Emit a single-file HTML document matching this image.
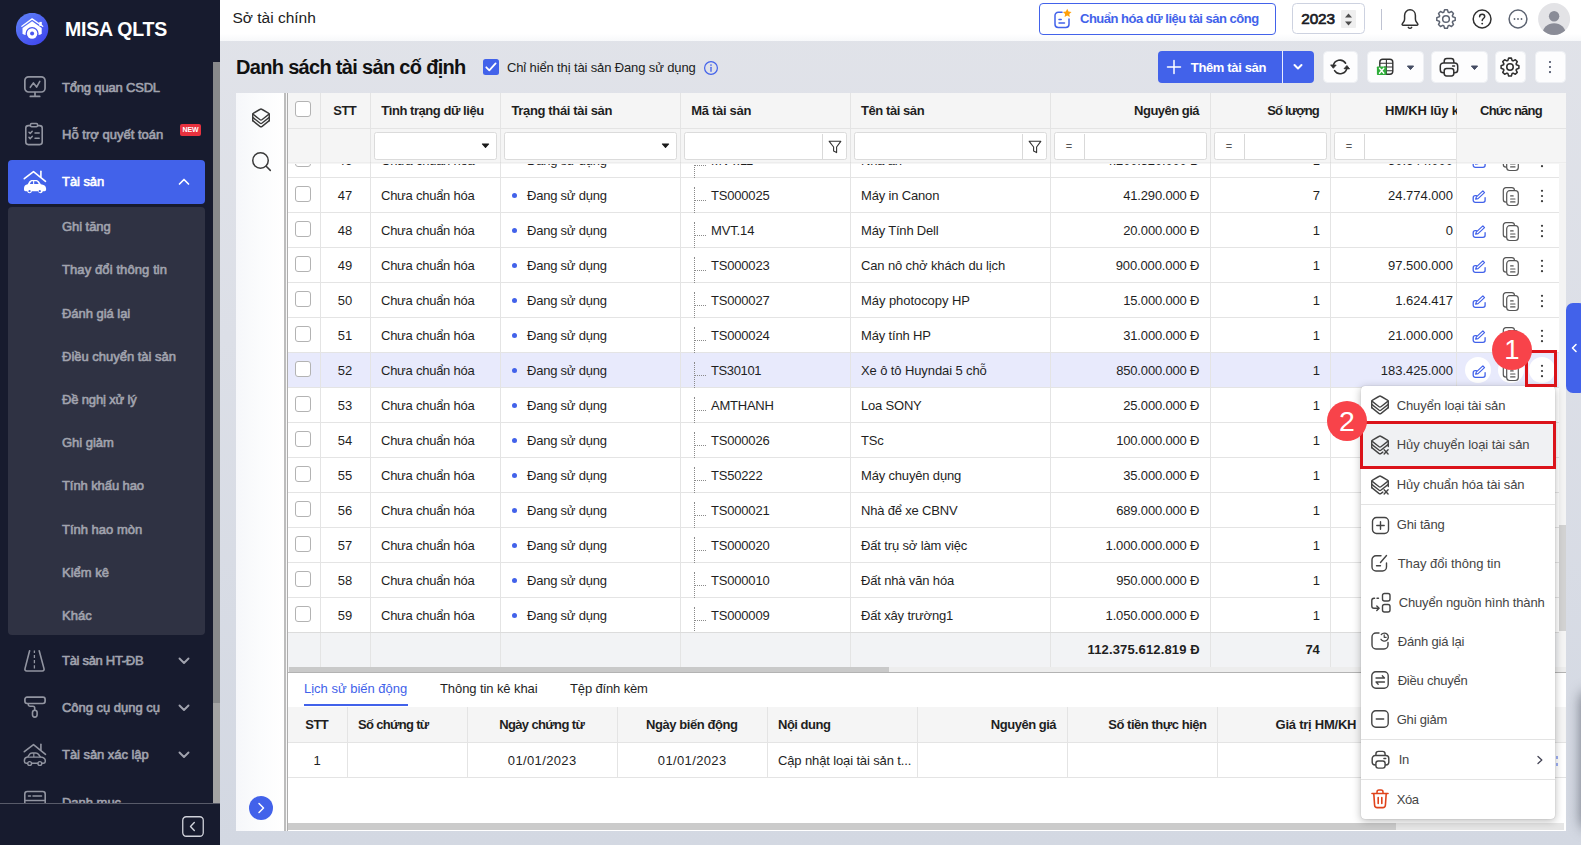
<!DOCTYPE html>
<html lang="vi"><head><meta charset="utf-8"><title>MISA QLTS</title>
<style>
html,body{margin:0;padding:0}
body{width:1581px;height:845px;overflow:hidden;position:relative;font-family:"Liberation Sans", sans-serif;background:linear-gradient(180deg,#e1e3e9 0%,#dcdfe7 40%,#d3d8e2 100%);-webkit-font-smoothing:antialiased}
div,svg{box-sizing:border-box}
</style></head><body>
<div id="sidebar" style="position:absolute;left:0;top:0;width:220px;height:845px;background:#171b2e;overflow:hidden">
<svg style="position:absolute;left:16px;top:13px;" width="33" height="33" viewBox="0 0 33 33" fill="none">
<defs><linearGradient id="lg" x1="0.15" y1="0.1" x2="0.85" y2="0.95"><stop offset="0" stop-color="#5c7cf6"/><stop offset="1" stop-color="#3f46ee"/></linearGradient></defs>
<circle cx="16.100" cy="16" r="16.200" fill="url(#lg)"/>
<path d="M5.900 13.300 L16.100 5.900 L26.700 13.300" stroke="#fff" stroke-width="1.300" stroke-linecap="round" stroke-linejoin="round"/>
<rect x="23.300" y="8.900" width="2.500" height="4" fill="#fff"/>
<path d="M16.100 8.200 L25.700 15 V20.200 L24.300 21.700 H7.900 L6.500 20.200 V15 Z" fill="#fff"/>
<circle cx="16.100" cy="20.500" r="6.500" fill="#4a57f0"/>
<circle cx="16.100" cy="20.500" r="5.200" fill="#fff"/>
<circle cx="16.100" cy="20.500" r="2" fill="#4a57f0"/>
</svg>
<div style="position:absolute;top:16.80px;line-height:24px;font-size:19.5px;font-weight:700;color:#fff;white-space:nowrap;letter-spacing:-0.222px;left:65px;">MISA QLTS</div>
<svg style="position:absolute;left:23px;top:75px;" width="24" height="24" viewBox="0 0 24 24" fill="none">
<rect x="1.850" y="1.800" width="20.200" height="15.200" rx="3.800" stroke="#9295a1" stroke-width="1.700"/>
<path d="M12 17.500v3.900M7.300 21.400h9.400" stroke="#9295a1" stroke-width="1.700" stroke-linecap="round"/>
<path d="M7.300 12.300l3.100-4.400 3.200 4.200 3.200-5.700" stroke="#9295a1" stroke-width="1.600" stroke-linecap="round" stroke-linejoin="round"/></svg>
<div style="position:absolute;top:78.30px;line-height:20px;font-size:13px;font-weight:400;color:#a1a3ae;white-space:nowrap;letter-spacing:-0.182px;-webkit-text-stroke:0.6px #a1a3ae;left:62px;">Tổng quan CSDL</div>
<svg style="position:absolute;left:23px;top:122px;" width="24" height="24" viewBox="0 0 24 24" fill="none">
<rect x="2.800" y="3.600" width="16.400" height="19" rx="2.500" stroke="#9295a1" stroke-width="1.600"/>
<path d="M7.500 3.800V2.600a1 1 0 0 1 1-1h5a1 1 0 0 1 1 1v1.200a1 1 0 0 1-1 1h-5a1 1 0 0 1-1-1z" stroke="#9295a1" stroke-width="1.500" fill="#171b2e"/>
<path d="M6 10.200l1.200 1.200 2-2.200M6 15.400l1.200 1.200 2-2.200M12 11h4.200M12 16.200h4.200" stroke="#9295a1" stroke-width="1.500" stroke-linecap="round" stroke-linejoin="round"/></svg>
<div style="position:absolute;top:124.80px;line-height:20px;font-size:13px;font-weight:400;color:#a1a3ae;white-space:nowrap;letter-spacing:0.016px;-webkit-text-stroke:0.6px #a1a3ae;left:62px;">Hỗ trợ quyết toán</div>
<div style="position:absolute;left:180px;top:124px;width:21px;height:12px;border-radius:2px;background:#e8323f;color:#fff;font-size:7px;font-weight:700;line-height:12px;text-align:center;letter-spacing:-0.1px">NEW</div>
<div style="position:absolute;left:8px;top:160px;width:197px;height:44px;background:#4262ea;border-radius:4px"></div>
<svg style="position:absolute;left:23px;top:169px;" width="24" height="25" viewBox="0 0 24 25" fill="none"><path d="M1.300 9.700 L10.500 2.600 L22.500 12.300" stroke="#fff" stroke-width="1.600" stroke-linecap="round" stroke-linejoin="round"/>
<path d="M17.900 2.300v5.500" stroke="#fff" stroke-width="1.600" stroke-linecap="round"/><path d="M1 19.300c0-2.300 1.400-3.700 3.700-4l1.400-2.500c.7-1.300 1.800-1.900 3.300-1.900h3.400c1.500 0 2.600.6 3.400 1.800l1.700 2.600c2.900.3 5.200 1.600 5.200 4.100v1.200c0 1-.6 1.700-1.700 1.700h-1.600a2.400 2.400 0 0 1-4.700 0H8.900a2.400 2.400 0 0 1-4.700 0H2.700C1.600 22.300 1 21.600 1 20.600z" fill="#fff"/>
<path d="M6.800 15l1.100-2c.3-.5.700-.8 1.300-.8h.9V15z M11.200 12.200h1.800c.6 0 1.100.3 1.400.8l1.300 2h-4.500z" fill="#4262ea"/>
<circle cx="6.550" cy="22.200" r="1.150" fill="#4262ea"/><circle cx="16.750" cy="22.200" r="1.150" fill="#4262ea"/></svg>
<div style="position:absolute;top:172.30px;line-height:20px;font-size:13px;font-weight:400;color:#fff;white-space:nowrap;letter-spacing:-0.063px;-webkit-text-stroke:0.6px #fff;left:62px;">Tài sản</div>
<svg style="position:absolute;left:178px;top:175.5px;" width="12" height="12" viewBox="0 0 12 12" fill="none"><path d="M1.5 8 L6 3.5 L10.5 8" stroke="#fff" stroke-width="1.7" stroke-linecap="round" stroke-linejoin="round"/></svg>
<div style="position:absolute;left:8px;top:207px;width:197px;height:428px;background:#2f3243;border-radius:4px"></div>
<div style="position:absolute;top:217.10px;line-height:20px;font-size:13px;font-weight:400;color:#a1a3ae;white-space:nowrap;letter-spacing:-0.057px;-webkit-text-stroke:0.6px #a1a3ae;left:62px;">Ghi tăng</div>
<div style="position:absolute;top:260.30px;line-height:20px;font-size:13px;font-weight:400;color:#a1a3ae;white-space:nowrap;letter-spacing:0.102px;-webkit-text-stroke:0.6px #a1a3ae;left:62px;">Thay đổi thông tin</div>
<div style="position:absolute;top:303.50px;line-height:20px;font-size:13px;font-weight:400;color:#a1a3ae;white-space:nowrap;letter-spacing:-0.038px;-webkit-text-stroke:0.6px #a1a3ae;left:62px;">Đánh giá lại</div>
<div style="position:absolute;top:346.70px;line-height:20px;font-size:13px;font-weight:400;color:#a1a3ae;white-space:nowrap;letter-spacing:-0.01px;-webkit-text-stroke:0.6px #a1a3ae;left:62px;">Điều chuyển tài sản</div>
<div style="position:absolute;top:389.90px;line-height:20px;font-size:13px;font-weight:400;color:#a1a3ae;white-space:nowrap;letter-spacing:-0.148px;-webkit-text-stroke:0.6px #a1a3ae;left:62px;">Đề nghị xử lý</div>
<div style="position:absolute;top:433.10px;line-height:20px;font-size:13px;font-weight:400;color:#a1a3ae;white-space:nowrap;letter-spacing:-0.029px;-webkit-text-stroke:0.6px #a1a3ae;left:62px;">Ghi giảm</div>
<div style="position:absolute;top:476.30px;line-height:20px;font-size:13px;font-weight:400;color:#a1a3ae;white-space:nowrap;letter-spacing:-0.087px;-webkit-text-stroke:0.6px #a1a3ae;left:62px;">Tính khấu hao</div>
<div style="position:absolute;top:519.50px;line-height:20px;font-size:13px;font-weight:400;color:#a1a3ae;white-space:nowrap;letter-spacing:-0.002px;-webkit-text-stroke:0.6px #a1a3ae;left:62px;">Tính hao mòn</div>
<div style="position:absolute;top:562.70px;line-height:20px;font-size:13px;font-weight:400;color:#a1a3ae;white-space:nowrap;letter-spacing:-0.01px;-webkit-text-stroke:0.6px #a1a3ae;left:62px;">Kiểm kê</div>
<div style="position:absolute;top:605.90px;line-height:20px;font-size:13px;font-weight:400;color:#a1a3ae;white-space:nowrap;letter-spacing:0.015px;-webkit-text-stroke:0.6px #a1a3ae;left:62px;">Khác</div>
<svg style="position:absolute;left:23px;top:648px;" width="24" height="25" viewBox="0 0 24 25" fill="none">
<path d="M6.600 2.800 L2 20.600 c-.4 1.400.3 2.400 1.700 2.400 h15.600 c1.400 0 2.100-1 1.700-2.400 L16.200 2.800" stroke="#9295a1" stroke-width="1.600" stroke-linecap="round" stroke-linejoin="round"/>
<path d="M11.400 2.600v2.400M11.400 7v3M11.400 12v3.200M11.400 17.200v3.300" stroke="#9295a1" stroke-width="1.300"/></svg>
<div style="position:absolute;top:651.30px;line-height:20px;font-size:13px;font-weight:400;color:#a1a3ae;white-space:nowrap;letter-spacing:-0.304px;-webkit-text-stroke:0.6px #a1a3ae;left:62px;">Tài sản HT-ĐB</div>
<svg style="position:absolute;left:178px;top:654.5px;" width="12" height="12" viewBox="0 0 12 12" fill="none"><path d="M1.5 3.5 L6 8 L10.5 3.5" stroke="#a1a3ae" stroke-width="1.900" stroke-linecap="round" stroke-linejoin="round"/></svg>
<svg style="position:absolute;left:23px;top:695.2px;" width="24" height="25" viewBox="0 0 24 25" fill="none">
<rect x="1.900" y="2.100" width="20.200" height="6.400" rx="2.200" stroke="#9295a1" stroke-width="1.700"/>
<path d="M5.300 8.800v.7a1.800 1.800 0 0 0 1.800 1.800h2.900a1.700 1.700 0 0 1 1.700 1.700v1.800" stroke="#9295a1" stroke-width="1.600" stroke-linecap="round"/>
<rect x="9.500" y="15.200" width="4.600" height="6.900" rx="2.300" stroke="#9295a1" stroke-width="1.600"/></svg>
<div style="position:absolute;top:698.30px;line-height:20px;font-size:13px;font-weight:400;color:#a1a3ae;white-space:nowrap;letter-spacing:-0.026px;-webkit-text-stroke:0.6px #a1a3ae;left:62px;">Công cụ dụng cụ</div>
<svg style="position:absolute;left:178px;top:701.5px;" width="12" height="12" viewBox="0 0 12 12" fill="none"><path d="M1.5 3.5 L6 8 L10.5 3.5" stroke="#a1a3ae" stroke-width="1.900" stroke-linecap="round" stroke-linejoin="round"/></svg>
<svg style="position:absolute;left:23px;top:742px;" width="24" height="25" viewBox="0 0 24 25" fill="none"><path d="M1.300 9.700 L10.500 2.600 L22.500 12.300" stroke="#9295a1" stroke-width="1.600" stroke-linecap="round" stroke-linejoin="round"/>
<path d="M17.900 2.300v5.500" stroke="#9295a1" stroke-width="1.600" stroke-linecap="round"/><path d="M4.300 21.300H3.400c-1.300 0-2-.8-2-2v-.9c0-1.900 1.300-3 3.300-3.300l1.600-2.500c.6-1 1.500-1.500 2.700-1.500h3.800c1.200 0 2.100.5 2.800 1.400l2 2.600c2.700.3 4.700 1.500 4.700 3.700v.5c0 1.200-.7 2-2 2h-.9M9 21.300h5.600" stroke="#9295a1" stroke-width="1.500" stroke-linecap="round" stroke-linejoin="round"/>
<path d="M5.500 15.100h11.600M10.800 11.500v3.400" stroke="#9295a1" stroke-width="1.200" stroke-linecap="round"/>
<circle cx="6.650" cy="21.500" r="1.900" stroke="#9295a1" stroke-width="1.400"/><circle cx="16.850" cy="21.500" r="1.900" stroke="#9295a1" stroke-width="1.400"/></svg>
<div style="position:absolute;top:745.30px;line-height:20px;font-size:13px;font-weight:400;color:#a1a3ae;white-space:nowrap;letter-spacing:-0.049px;-webkit-text-stroke:0.6px #a1a3ae;left:62px;">Tài sản xác lập</div>
<svg style="position:absolute;left:178px;top:748.5px;" width="12" height="12" viewBox="0 0 12 12" fill="none"><path d="M1.5 3.5 L6 8 L10.5 3.5" stroke="#a1a3ae" stroke-width="1.900" stroke-linecap="round" stroke-linejoin="round"/></svg>
<svg style="position:absolute;left:23px;top:789px;" width="24" height="24" viewBox="0 0 24 24" fill="none">
<rect x="1.800" y="2.500" width="20.400" height="19" rx="2.500" stroke="#9295a1" stroke-width="1.600"/>
<path d="M5.500 7h2M10 7h8.500M2 11.500h20" stroke="#9295a1" stroke-width="1.600" stroke-linecap="round"/></svg>
<div style="position:absolute;top:793.30px;line-height:20px;font-size:13px;font-weight:400;color:#a1a3ae;white-space:nowrap;letter-spacing:-0.019px;-webkit-text-stroke:0.6px #a1a3ae;left:62px;">Danh mục</div>
<div style="position:absolute;left:213px;top:41px;width:7px;height:762px;background:#a4a4a4"></div>
<div style="position:absolute;left:213px;top:62px;width:7px;height:641px;background:#88898b"></div>
<div style="position:absolute;left:213px;top:0px;width:7px;height:62px;background:#171b2e"></div>
<div style="position:absolute;left:0px;top:803px;width:220px;height:42px;background:#171b2e;border-top:1px solid #585b69"></div>
<svg style="position:absolute;left:182px;top:816px;" width="22" height="21" viewBox="0 0 22 21" fill="none"><rect x="0.75" y="0.75" width="20.5" height="19.5" rx="3.5" stroke="#d0d2da" stroke-width="1.3"/><path d="M12.3 6.5 L8.5 10.5 L12.3 14.5" stroke="#d0d2da" stroke-width="1.4" stroke-linecap="round" stroke-linejoin="round"/></svg>
</div>
<div id="topbar" style="position:absolute;left:220px;top:0;width:1361px;height:41px;background:linear-gradient(180deg,#fff 0%,#fff 82%,#f7f8fa 100%)"></div>
<div style="position:absolute;top:7.20px;line-height:22px;font-size:15.5px;font-weight:400;color:#212121;white-space:nowrap;letter-spacing:-0.009px;left:232.5px;">Sở tài chính</div>
<div style="position:absolute;left:1039px;top:3px;width:237px;height:32px;border:1px solid #4262ea;border-radius:4px;background:#fff"></div>
<svg style="position:absolute;left:1051px;top:8px;" width="22" height="22" viewBox="0 0 22 22" fill="none">
<path d="M11 4.3H7.2A3.2 3.2 0 0 0 4 7.5v8.800a3.200 3.200 0 0 0 3.200 3.200h7.600a3.200 3.200 0 0 0 3.200-3.200V11" stroke="#4262ea" stroke-width="1.5" stroke-linecap="round"/>
<path d="M8 11.500h2.200M8 15h5.500" stroke="#4262ea" stroke-width="1.5" stroke-linecap="round"/>
<path d="M16.2 0.800l1.300 2.700 3 .4-2.200 2.100.5 3-2.600-1.400-2.600 1.400.5-3-2.200-2.100 3-.4z" fill="#ff9f0a"/></svg>
<div style="position:absolute;top:9.30px;line-height:20px;font-size:13px;font-weight:700;color:#4262ea;white-space:nowrap;letter-spacing:-0.497px;left:1080px;">Chuẩn hóa dữ liệu tài sản công</div>
<div style="position:absolute;left:1292px;top:3px;width:73px;height:31px;border:1px solid #cdd2e0;border-radius:4.500px;background:#fff"></div>
<div style="position:absolute;top:7.70px;line-height:22px;font-size:15.3px;font-weight:400;color:#1a1a24;white-space:nowrap;letter-spacing:-0.133px;-webkit-text-stroke:0.7px #1a1a24;left:1301.3px;">2023</div>
<div style="position:absolute;left:1341px;top:10px;width:15px;height:17.7px;background:#efefef;border-radius:1px"></div>
<svg style="position:absolute;left:1344px;top:11.5px;" width="9" height="15" viewBox="0 0 9 15" fill="none"><path d="M1 5.500 L4.500 1.600 L8 5.500z M1 9.400 L4.500 13.400 L8 9.400z" fill="#4d4d4d"/></svg>
<div style="position:absolute;left:1381px;top:9px;width:1px;height:21px;background:#bfc3d2"></div>
<svg style="position:absolute;left:1398px;top:6.8px;" width="24" height="24" viewBox="0 0 24 24" fill="none"><path d="M12 2.800c-3.100 0-5.400 2.400-5.400 5.600v3.600c0 1.300-.4 2.300-1.200 3.300l-1 1.300c-.6.800-.2 1.700.8 1.700h13.600c1 0 1.400-.9.800-1.700l-1-1.300c-.8-1-1.200-2-1.200-3.300V8.400c0-3.200-2.300-5.600-5.400-5.600z" stroke="#303030" stroke-width="1.500" stroke-linejoin="round"/><path d="M10.300 20.300c.4.600 1 .9 1.700.9s1.300-.3 1.700-.9" stroke="#303030" stroke-width="1.400" stroke-linecap="round"/></svg>
<svg style="position:absolute;left:1434px;top:6.800000000000001px;" width="24" height="24" viewBox="-12 -12 24 24" fill="none"><path d="M-2.22 -6.71 L-1.39 -9.20 L1.39 -9.20 L2.22 -6.71 L3.17 -6.32 L5.52 -7.48 L7.48 -5.52 L6.32 -3.17 L6.71 -2.22 L9.20 -1.39 L9.20 1.39 L6.71 2.22 L6.32 3.17 L7.48 5.52 L5.52 7.48 L3.17 6.32 L2.22 6.71 L1.39 9.20 L-1.39 9.20 L-2.22 6.71 L-3.17 6.32 L-5.52 7.48 L-7.48 5.52 L-6.32 3.17 L-6.71 2.22 L-9.20 1.39 L-9.20 -1.39 L-6.71 -2.22 L-6.32 -3.17 L-7.48 -5.52 L-5.52 -7.48 L-3.17 -6.32 Z" stroke="#5d6472" stroke-width="1.5" stroke-linejoin="round"/><circle cx="0" cy="0" r="3.35" stroke="#5d6472" stroke-width="1.5"/></svg>
<svg style="position:absolute;left:1470px;top:6.8px;" width="24" height="24" viewBox="0 0 24 24" fill="none"><circle cx="12.100" cy="12" r="8.900" stroke="#303030" stroke-width="1.500"/><path d="M9.600 9.700c0-1.500 1.100-2.500 2.600-2.500 1.400 0 2.500.9 2.500 2.300 0 1.900-2.500 2.100-2.500 4" stroke="#303030" stroke-width="1.500" stroke-linecap="round"/><circle cx="12.200" cy="16.600" r="0.950" fill="#303030"/></svg>
<svg style="position:absolute;left:1506px;top:6.8px;" width="24" height="24" viewBox="0 0 24 24" fill="none"><circle cx="12" cy="12" r="8.900" stroke="#5d6472" stroke-width="1.500"/><circle cx="8.500" cy="12" r="0.900" fill="#5d6472"/><circle cx="12" cy="12" r="0.900" fill="#5d6472"/><circle cx="15.500" cy="12" r="0.900" fill="#5d6472"/></svg>
<svg style="position:absolute;left:1538px;top:2.8px;" width="33" height="33" viewBox="0 0 33 33" fill="none"><defs><clipPath id="av"><circle cx="16.100" cy="16" r="16"/></clipPath></defs><circle cx="16.100" cy="16" r="16" fill="#e3e3e6"/><g clip-path="url(#av)"><circle cx="16.100" cy="13.300" r="5.200" fill="#8a8c97"/><path d="M4.600 31c0-6.500 5-10.700 11.500-10.700S27.600 24.500 27.600 31v4h-23z" fill="#8a8c97"/></g></svg>
<div style="position:absolute;top:53.30px;line-height:28px;font-size:20px;font-weight:700;color:#111;white-space:nowrap;letter-spacing:-0.685px;left:236px;">Danh sách tài sản cố định</div>
<div style="position:absolute;left:483px;top:59px;width:16px;height:16px;background:#4262ea;border-radius:2.500px"></div>
<svg style="position:absolute;left:483px;top:59px;" width="16" height="16" viewBox="0 0 16 16" fill="none"><path d="M3.300 8.300l3 3 6.300-6.900" stroke="#fff" stroke-width="1.800" stroke-linecap="round" stroke-linejoin="round"/></svg>
<div style="position:absolute;top:58.30px;line-height:20px;font-size:13px;font-weight:400;color:#222;white-space:nowrap;letter-spacing:-0.133px;left:507px;">Chỉ hiển thị tài sản Đang sử dụng</div>
<svg style="position:absolute;left:703px;top:60px;" width="16" height="16" viewBox="0 0 16 16" fill="none"><circle cx="8" cy="8" r="6.400" stroke="#4262ea" stroke-width="1.200"/><path d="M8 7.300v4" stroke="#4262ea" stroke-width="1.300" stroke-linecap="round"/><circle cx="8" cy="5" r="0.850" fill="#4262ea"/></svg>
<div style="position:absolute;left:1158px;top:51px;width:156px;height:32px;background:#4262ea;border-radius:4px"></div>
<div style="position:absolute;left:1282px;top:51px;width:1px;height:32px;background:#e8ecff"></div>
<svg style="position:absolute;left:1166px;top:59px;" width="16" height="16" viewBox="0 0 16 16" fill="none"><path d="M8 1.500v13M1.500 8h13" stroke="#fff" stroke-width="1.500" stroke-linecap="round"/></svg>
<div style="position:absolute;top:57.50px;line-height:20px;font-size:13px;font-weight:700;color:#fff;white-space:nowrap;letter-spacing:-0.356px;left:1190.8px;">Thêm tài sản</div>
<svg style="position:absolute;left:1292px;top:61px;" width="12" height="12" viewBox="0 0 12 12" fill="none"><path d="M2.500 4 L6 7.500 L9.500 4" stroke="#fff" stroke-width="2" stroke-linecap="round" stroke-linejoin="round"/></svg>
<div style="position:absolute;left:1322.5px;top:51px;width:35px;height:32px;background:#fdfdfe;border:1px solid #eef0f4;border-radius:4.500px"></div>
<svg style="position:absolute;left:1328px;top:55px;" width="24" height="24" viewBox="0 0 24 24" fill="none"><path d="M5.300 11.200a6.700 6.700 0 0 1 12.300-3" stroke="#303030" stroke-width="1.600" stroke-linecap="round"/><path d="M18.900 12.600a6.700 6.700 0 0 1-12.300 3" stroke="#303030" stroke-width="1.600" stroke-linecap="round"/>
<path d="M2.600 9.900l2.700 3.400 2.900-3.200z" fill="#303030" stroke="#303030" stroke-width="0.800" stroke-linejoin="round"/><path d="M21.600 13.900l-2.700-3.400-2.900 3.200z" fill="#303030" stroke="#303030" stroke-width="0.800" stroke-linejoin="round"/></svg>
<div style="position:absolute;left:1366.5px;top:51px;width:57px;height:32px;background:#fdfdfe;border:1px solid #eef0f4;border-radius:4.500px"></div>
<svg style="position:absolute;left:1375px;top:56px;" width="22" height="22" viewBox="0 0 22 22" fill="none"><rect x="4.800" y="3.300" width="13" height="15" rx="3" stroke="#303030" stroke-width="1.400"/><path d="M4.800 7.200h13M9 11h8.800M9 14.800h8.800M11.400 3.300v15" stroke="#303030" stroke-width="1.100"/>
<rect x="1.900" y="10.400" width="9.600" height="8.600" rx="0.800" fill="#2fae3a"/><path d="M4.500 12.200l4.300 5M8.800 12.200l-4.300 5" stroke="#fff" stroke-width="1.400" stroke-linecap="round"/></svg>
<svg style="position:absolute;left:1406px;top:64.5px;" width="9" height="6" viewBox="0 0 9 6" fill="none"><path d="M1.400 1h6.200L4.500 4.600z" fill="#444c63" stroke="#444c63" stroke-width="1" stroke-linejoin="round"/></svg>
<div style="position:absolute;left:1430.5px;top:51px;width:57px;height:32px;background:#fdfdfe;border:1px solid #eef0f4;border-radius:4.500px"></div>
<svg style="position:absolute;left:1438px;top:56px;" width="22" height="22" viewBox="0 0 22 22" fill="none"><path d="M6.200 7V5.200A2.700 2.700 0 0 1 8.900 2.500h4.200a2.700 2.700 0 0 1 2.700 2.700V7" stroke="#303030" stroke-width="1.5"/>
<path d="M6.200 16.800H5.400A3.100 3.100 0 0 1 2.300 13.700V10A3.100 3.100 0 0 1 5.400 6.900h11.200A3.100 3.100 0 0 1 19.700 10v3.700a3.100 3.100 0 0 1-3.100 3.100h-.8" stroke="#303030" stroke-width="1.5"/>
<rect x="6.200" y="12.500" width="9.600" height="7.500" rx="2.400" stroke="#303030" stroke-width="1.5"/><path d="M14.600 9.900h1.900" stroke="#303030" stroke-width="1.5" stroke-linecap="round"/></svg>
<svg style="position:absolute;left:1470px;top:64.5px;" width="9" height="6" viewBox="0 0 9 6" fill="none"><path d="M1.400 1h6.200L4.500 4.600z" fill="#444c63" stroke="#444c63" stroke-width="1" stroke-linejoin="round"/></svg>
<div style="position:absolute;left:1494.5px;top:51px;width:31px;height:32px;background:#fdfdfe;border:1px solid #eef0f4;border-radius:4.500px"></div>
<svg style="position:absolute;left:1498px;top:55px;" width="24" height="24" viewBox="-12 -12 24 24" fill="none"><path d="M-2.15 -6.49 L-1.34 -8.90 L1.34 -8.90 L2.15 -6.49 L3.07 -6.11 L5.34 -7.24 L7.24 -5.34 L6.11 -3.07 L6.49 -2.15 L8.90 -1.34 L8.90 1.34 L6.49 2.15 L6.11 3.07 L7.24 5.34 L5.34 7.24 L3.07 6.11 L2.15 6.49 L1.34 8.90 L-1.34 8.90 L-2.15 6.49 L-3.07 6.11 L-5.34 7.24 L-7.24 5.34 L-6.11 3.07 L-6.49 2.15 L-8.90 1.34 L-8.90 -1.34 L-6.49 -2.15 L-6.11 -3.07 L-7.24 -5.34 L-5.34 -7.24 L-3.07 -6.11 Z" stroke="#303030" stroke-width="1.55" stroke-linejoin="round"/><circle cx="0" cy="0" r="3.24" stroke="#303030" stroke-width="1.55"/></svg>
<div style="position:absolute;left:1534.5px;top:51px;width:31px;height:32px;background:#fdfdfe;border:1px solid #eef0f4;border-radius:4.500px"></div>
<svg style="position:absolute;left:1547px;top:59px;" width="6" height="16" viewBox="0 0 6 16" fill="none"><circle cx="3" cy="3" r="1.050" fill="#444c63"/><circle cx="3" cy="8" r="1.050" fill="#444c63"/><circle cx="3" cy="13.100" r="1.050" fill="#444c63"/></svg>
<div style="position:absolute;left:236px;top:93px;width:1330px;height:738px;background:#fff"></div>
<div style="position:absolute;left:236px;top:93px;width:48px;height:738px;background:linear-gradient(to right,#f6f7fa 0%,#fbfcfd 50%,#fff 100%)"></div>
<svg style="position:absolute;left:250px;top:107.3px;" width="22" height="22" viewBox="-11 -11 22 22" fill="none"><g transform="scale(0.940,1)"><path d="M-1.300 -8.500 Q0 -9.300 1.300 -8.500 L7.900 -4.900 Q9.300 -4.100 7.900 -3.300 L1.300 1.500 Q0 2.400 -1.300 1.500 L-7.900 -3.300 Q-9.300 -4.100 -7.900 -4.900 Z" stroke="#3a3a3a" stroke-width="1.5" stroke-linejoin="round"/><path d="M-8.800 -0.600 L-1.200 5 Q0 5.800 1.200 5 L8.800 -0.600 M-8.800 2.700 L-1.200 8.400 Q0 9.200 1.200 8.400 L8.800 2.700" stroke="#3a3a3a" stroke-width="1.5" stroke-linecap="round" stroke-linejoin="round"/><path d="M-8.800 -4.100 V2.700 M8.800 -4.100 V2.700" stroke="#3a3a3a" stroke-width="1.5" stroke-linecap="round"/></g></svg>
<svg style="position:absolute;left:250px;top:150px;" width="23" height="23" viewBox="0 0 23 23" fill="none"><circle cx="10.500" cy="10.500" r="7.750" stroke="#3a3a3a" stroke-width="1.500"/><path d="M16.200 16.300l4.100 4.100" stroke="#3a3a3a" stroke-width="1.500" stroke-linecap="round"/></svg>
<div style="position:absolute;left:249px;top:796px;width:24px;height:24px;background:#4262ea;border-radius:12px"></div>
<svg style="position:absolute;left:249px;top:796px;" width="24" height="24" viewBox="0 0 24 24" fill="none"><path d="M10 7.500l4.500 4.500-4.500 4.500" stroke="#fff" stroke-width="1.500" stroke-linecap="round" stroke-linejoin="round"/></svg>
<div style="position:absolute;left:284px;top:93px;width:2px;height:738px;background:#bdbdbd"></div>
<div style="position:absolute;left:286px;top:93px;width:1px;height:738px;background:#f7f7f7"></div>
<div style="position:absolute;left:287px;top:93px;width:1px;height:738px;background:#adadad"></div>
<div style="position:absolute;left:0;top:163px;width:1581px;height:505px;overflow:hidden"><div style="position:absolute;left:0;top:-163px;width:1581px;height:845px">
<div style="position:absolute;left:288px;top:177px;width:1271px;height:1px;background:#e4e4e4"></div>
<div style="position:absolute;left:295px;top:151px;width:16px;height:16px;background:#fff;border:1px solid #b3b3b3;border-radius:3px"></div>
<div style="position:absolute;top:150.80px;line-height:20px;font-size:13px;font-weight:400;color:#1f1f1f;white-space:nowrap;left:145.00px;width:400px;text-align:center;">46</div>
<div style="position:absolute;top:150.80px;line-height:20px;font-size:13px;font-weight:400;color:#1f1f1f;white-space:nowrap;letter-spacing:-0.249px;left:381px;">Chưa chuẩn hóa</div>
<div style="position:absolute;left:511.5px;top:157.5px;width:5px;height:5px;background:#4262ea;border-radius:3px"></div>
<div style="position:absolute;top:150.80px;line-height:20px;font-size:13px;font-weight:400;color:#1f1f1f;white-space:nowrap;letter-spacing:-0.228px;left:527px;">Đang sử dụng</div>
<div style="position:absolute;left:694px;top:152px;width:1px;height:26px;border-left:1px dotted #8a8a8a"></div>
<div style="position:absolute;left:695px;top:165px;width:11px;height:1px;border-top:1px dotted #8a8a8a"></div>
<div style="position:absolute;top:150.80px;line-height:20px;font-size:13px;font-weight:400;color:#1f1f1f;white-space:nowrap;letter-spacing:-0.18px;left:711px;">MVT.11</div>
<div style="position:absolute;top:150.80px;line-height:20px;font-size:13px;font-weight:400;color:#1f1f1f;white-space:nowrap;letter-spacing:-0.175px;left:861px;">Nhà ăn</div>
<div style="position:absolute;top:150.80px;line-height:20px;font-size:13px;font-weight:400;color:#1f1f1f;white-space:nowrap;letter-spacing:-0.16px;right:381.66px;text-align:right;">4.200.520.000 Đ</div>
<div style="position:absolute;top:150.80px;line-height:20px;font-size:13px;font-weight:400;color:#1f1f1f;white-space:nowrap;right:261.00px;text-align:right;">1</div>
<div style="position:absolute;top:150.80px;line-height:20px;font-size:13px;font-weight:400;color:#1f1f1f;white-space:nowrap;right:128.00px;text-align:right;">50.644.000</div>
<div style="position:absolute;left:288px;top:212px;width:1271px;height:1px;background:#e4e4e4"></div>
<div style="position:absolute;left:295px;top:186px;width:16px;height:16px;background:#fff;border:1px solid #b3b3b3;border-radius:3px"></div>
<div style="position:absolute;top:185.80px;line-height:20px;font-size:13px;font-weight:400;color:#1f1f1f;white-space:nowrap;left:145.00px;width:400px;text-align:center;">47</div>
<div style="position:absolute;top:185.80px;line-height:20px;font-size:13px;font-weight:400;color:#1f1f1f;white-space:nowrap;letter-spacing:-0.249px;left:381px;">Chưa chuẩn hóa</div>
<div style="position:absolute;left:511.5px;top:192.5px;width:5px;height:5px;background:#4262ea;border-radius:3px"></div>
<div style="position:absolute;top:185.80px;line-height:20px;font-size:13px;font-weight:400;color:#1f1f1f;white-space:nowrap;letter-spacing:-0.228px;left:527px;">Đang sử dụng</div>
<div style="position:absolute;left:694px;top:187px;width:1px;height:26px;border-left:1px dotted #8a8a8a"></div>
<div style="position:absolute;left:695px;top:200px;width:11px;height:1px;border-top:1px dotted #8a8a8a"></div>
<div style="position:absolute;top:185.80px;line-height:20px;font-size:13px;font-weight:400;color:#1f1f1f;white-space:nowrap;letter-spacing:-0.188px;left:711px;">TS000025</div>
<div style="position:absolute;top:185.80px;line-height:20px;font-size:13px;font-weight:400;color:#1f1f1f;white-space:nowrap;letter-spacing:-0.168px;left:861px;">Máy in Canon</div>
<div style="position:absolute;top:185.80px;line-height:20px;font-size:13px;font-weight:400;color:#1f1f1f;white-space:nowrap;letter-spacing:-0.157px;right:381.66px;text-align:right;">41.290.000 Đ</div>
<div style="position:absolute;top:185.80px;line-height:20px;font-size:13px;font-weight:400;color:#1f1f1f;white-space:nowrap;right:261.00px;text-align:right;">7</div>
<div style="position:absolute;top:185.80px;line-height:20px;font-size:13px;font-weight:400;color:#1f1f1f;white-space:nowrap;right:128.00px;text-align:right;">24.774.000</div>
<div style="position:absolute;left:288px;top:247px;width:1271px;height:1px;background:#e4e4e4"></div>
<div style="position:absolute;left:295px;top:221px;width:16px;height:16px;background:#fff;border:1px solid #b3b3b3;border-radius:3px"></div>
<div style="position:absolute;top:220.80px;line-height:20px;font-size:13px;font-weight:400;color:#1f1f1f;white-space:nowrap;left:145.00px;width:400px;text-align:center;">48</div>
<div style="position:absolute;top:220.80px;line-height:20px;font-size:13px;font-weight:400;color:#1f1f1f;white-space:nowrap;letter-spacing:-0.249px;left:381px;">Chưa chuẩn hóa</div>
<div style="position:absolute;left:511.5px;top:227.5px;width:5px;height:5px;background:#4262ea;border-radius:3px"></div>
<div style="position:absolute;top:220.80px;line-height:20px;font-size:13px;font-weight:400;color:#1f1f1f;white-space:nowrap;letter-spacing:-0.228px;left:527px;">Đang sử dụng</div>
<div style="position:absolute;left:694px;top:222px;width:1px;height:26px;border-left:1px dotted #8a8a8a"></div>
<div style="position:absolute;left:695px;top:235px;width:11px;height:1px;border-top:1px dotted #8a8a8a"></div>
<div style="position:absolute;top:220.80px;line-height:20px;font-size:13px;font-weight:400;color:#1f1f1f;white-space:nowrap;letter-spacing:-0.13px;left:711px;">MVT.14</div>
<div style="position:absolute;top:220.80px;line-height:20px;font-size:13px;font-weight:400;color:#1f1f1f;white-space:nowrap;letter-spacing:-0.19px;left:861px;">Máy Tính Dell</div>
<div style="position:absolute;top:220.80px;line-height:20px;font-size:13px;font-weight:400;color:#1f1f1f;white-space:nowrap;letter-spacing:-0.163px;right:381.66px;text-align:right;">20.000.000 Đ</div>
<div style="position:absolute;top:220.80px;line-height:20px;font-size:13px;font-weight:400;color:#1f1f1f;white-space:nowrap;right:261.00px;text-align:right;">1</div>
<div style="position:absolute;top:220.80px;line-height:20px;font-size:13px;font-weight:400;color:#1f1f1f;white-space:nowrap;right:128.00px;text-align:right;">0</div>
<div style="position:absolute;left:288px;top:282px;width:1271px;height:1px;background:#e4e4e4"></div>
<div style="position:absolute;left:295px;top:256px;width:16px;height:16px;background:#fff;border:1px solid #b3b3b3;border-radius:3px"></div>
<div style="position:absolute;top:255.80px;line-height:20px;font-size:13px;font-weight:400;color:#1f1f1f;white-space:nowrap;left:145.00px;width:400px;text-align:center;">49</div>
<div style="position:absolute;top:255.80px;line-height:20px;font-size:13px;font-weight:400;color:#1f1f1f;white-space:nowrap;letter-spacing:-0.249px;left:381px;">Chưa chuẩn hóa</div>
<div style="position:absolute;left:511.5px;top:262.5px;width:5px;height:5px;background:#4262ea;border-radius:3px"></div>
<div style="position:absolute;top:255.80px;line-height:20px;font-size:13px;font-weight:400;color:#1f1f1f;white-space:nowrap;letter-spacing:-0.228px;left:527px;">Đang sử dụng</div>
<div style="position:absolute;left:694px;top:257px;width:1px;height:26px;border-left:1px dotted #8a8a8a"></div>
<div style="position:absolute;left:695px;top:270px;width:11px;height:1px;border-top:1px dotted #8a8a8a"></div>
<div style="position:absolute;top:255.80px;line-height:20px;font-size:13px;font-weight:400;color:#1f1f1f;white-space:nowrap;letter-spacing:-0.188px;left:711px;">TS000023</div>
<div style="position:absolute;top:255.80px;line-height:20px;font-size:13px;font-weight:400;color:#1f1f1f;white-space:nowrap;letter-spacing:-0.133px;left:861px;">Can nô chở khách du lịch</div>
<div style="position:absolute;top:255.80px;line-height:20px;font-size:13px;font-weight:400;color:#1f1f1f;white-space:nowrap;letter-spacing:-0.123px;right:381.62px;text-align:right;">900.000.000 Đ</div>
<div style="position:absolute;top:255.80px;line-height:20px;font-size:13px;font-weight:400;color:#1f1f1f;white-space:nowrap;right:261.00px;text-align:right;">1</div>
<div style="position:absolute;top:255.80px;line-height:20px;font-size:13px;font-weight:400;color:#1f1f1f;white-space:nowrap;right:128.00px;text-align:right;">97.500.000</div>
<div style="position:absolute;left:288px;top:317px;width:1271px;height:1px;background:#e4e4e4"></div>
<div style="position:absolute;left:295px;top:291px;width:16px;height:16px;background:#fff;border:1px solid #b3b3b3;border-radius:3px"></div>
<div style="position:absolute;top:290.80px;line-height:20px;font-size:13px;font-weight:400;color:#1f1f1f;white-space:nowrap;left:145.00px;width:400px;text-align:center;">50</div>
<div style="position:absolute;top:290.80px;line-height:20px;font-size:13px;font-weight:400;color:#1f1f1f;white-space:nowrap;letter-spacing:-0.249px;left:381px;">Chưa chuẩn hóa</div>
<div style="position:absolute;left:511.5px;top:297.5px;width:5px;height:5px;background:#4262ea;border-radius:3px"></div>
<div style="position:absolute;top:290.80px;line-height:20px;font-size:13px;font-weight:400;color:#1f1f1f;white-space:nowrap;letter-spacing:-0.228px;left:527px;">Đang sử dụng</div>
<div style="position:absolute;left:694px;top:292px;width:1px;height:26px;border-left:1px dotted #8a8a8a"></div>
<div style="position:absolute;left:695px;top:305px;width:11px;height:1px;border-top:1px dotted #8a8a8a"></div>
<div style="position:absolute;top:290.80px;line-height:20px;font-size:13px;font-weight:400;color:#1f1f1f;white-space:nowrap;letter-spacing:-0.188px;left:711px;">TS000027</div>
<div style="position:absolute;top:290.80px;line-height:20px;font-size:13px;font-weight:400;color:#1f1f1f;white-space:nowrap;letter-spacing:-0.059px;left:861px;">Máy photocopy HP</div>
<div style="position:absolute;top:290.80px;line-height:20px;font-size:13px;font-weight:400;color:#1f1f1f;white-space:nowrap;letter-spacing:-0.163px;right:381.66px;text-align:right;">15.000.000 Đ</div>
<div style="position:absolute;top:290.80px;line-height:20px;font-size:13px;font-weight:400;color:#1f1f1f;white-space:nowrap;right:261.00px;text-align:right;">1</div>
<div style="position:absolute;top:290.80px;line-height:20px;font-size:13px;font-weight:400;color:#1f1f1f;white-space:nowrap;right:128.00px;text-align:right;">1.624.417</div>
<div style="position:absolute;left:288px;top:352px;width:1271px;height:1px;background:#e4e4e4"></div>
<div style="position:absolute;left:295px;top:326px;width:16px;height:16px;background:#fff;border:1px solid #b3b3b3;border-radius:3px"></div>
<div style="position:absolute;top:325.80px;line-height:20px;font-size:13px;font-weight:400;color:#1f1f1f;white-space:nowrap;left:145.00px;width:400px;text-align:center;">51</div>
<div style="position:absolute;top:325.80px;line-height:20px;font-size:13px;font-weight:400;color:#1f1f1f;white-space:nowrap;letter-spacing:-0.249px;left:381px;">Chưa chuẩn hóa</div>
<div style="position:absolute;left:511.5px;top:332.5px;width:5px;height:5px;background:#4262ea;border-radius:3px"></div>
<div style="position:absolute;top:325.80px;line-height:20px;font-size:13px;font-weight:400;color:#1f1f1f;white-space:nowrap;letter-spacing:-0.228px;left:527px;">Đang sử dụng</div>
<div style="position:absolute;left:694px;top:327px;width:1px;height:26px;border-left:1px dotted #8a8a8a"></div>
<div style="position:absolute;left:695px;top:340px;width:11px;height:1px;border-top:1px dotted #8a8a8a"></div>
<div style="position:absolute;top:325.80px;line-height:20px;font-size:13px;font-weight:400;color:#1f1f1f;white-space:nowrap;letter-spacing:-0.188px;left:711px;">TS000024</div>
<div style="position:absolute;top:325.80px;line-height:20px;font-size:13px;font-weight:400;color:#1f1f1f;white-space:nowrap;letter-spacing:-0.166px;left:861px;">Máy tính HP</div>
<div style="position:absolute;top:325.80px;line-height:20px;font-size:13px;font-weight:400;color:#1f1f1f;white-space:nowrap;letter-spacing:-0.163px;right:381.66px;text-align:right;">31.000.000 Đ</div>
<div style="position:absolute;top:325.80px;line-height:20px;font-size:13px;font-weight:400;color:#1f1f1f;white-space:nowrap;right:261.00px;text-align:right;">1</div>
<div style="position:absolute;top:325.80px;line-height:20px;font-size:13px;font-weight:400;color:#1f1f1f;white-space:nowrap;right:128.00px;text-align:right;">21.000.000</div>
<div style="position:absolute;left:288px;top:353px;width:1271px;height:34px;background:#e8eafc"></div>
<div style="position:absolute;left:288px;top:387px;width:1271px;height:1px;background:#e4e4e4"></div>
<div style="position:absolute;left:295px;top:361px;width:16px;height:16px;background:#fff;border:1px solid #b3b3b3;border-radius:3px"></div>
<div style="position:absolute;top:360.80px;line-height:20px;font-size:13px;font-weight:400;color:#1f1f1f;white-space:nowrap;left:145.00px;width:400px;text-align:center;">52</div>
<div style="position:absolute;top:360.80px;line-height:20px;font-size:13px;font-weight:400;color:#1f1f1f;white-space:nowrap;letter-spacing:-0.249px;left:381px;">Chưa chuẩn hóa</div>
<div style="position:absolute;left:511.5px;top:367.5px;width:5px;height:5px;background:#4262ea;border-radius:3px"></div>
<div style="position:absolute;top:360.80px;line-height:20px;font-size:13px;font-weight:400;color:#1f1f1f;white-space:nowrap;letter-spacing:-0.228px;left:527px;">Đang sử dụng</div>
<div style="position:absolute;left:694px;top:362px;width:1px;height:26px;border-left:1px dotted #8a8a8a"></div>
<div style="position:absolute;left:695px;top:375px;width:11px;height:1px;border-top:1px dotted #8a8a8a"></div>
<div style="position:absolute;top:360.80px;line-height:20px;font-size:13px;font-weight:400;color:#1f1f1f;white-space:nowrap;letter-spacing:-0.381px;left:711px;">TS30101</div>
<div style="position:absolute;top:360.80px;line-height:20px;font-size:13px;font-weight:400;color:#1f1f1f;white-space:nowrap;letter-spacing:-0.106px;left:861px;">Xe ô tô Huyndai 5 chỗ</div>
<div style="position:absolute;top:360.80px;line-height:20px;font-size:13px;font-weight:400;color:#1f1f1f;white-space:nowrap;letter-spacing:-0.164px;right:381.66px;text-align:right;">850.000.000 Đ</div>
<div style="position:absolute;top:360.80px;line-height:20px;font-size:13px;font-weight:400;color:#1f1f1f;white-space:nowrap;right:261.00px;text-align:right;">1</div>
<div style="position:absolute;top:360.80px;line-height:20px;font-size:13px;font-weight:400;color:#1f1f1f;white-space:nowrap;right:128.00px;text-align:right;">183.425.000</div>
<div style="position:absolute;left:288px;top:422px;width:1271px;height:1px;background:#e4e4e4"></div>
<div style="position:absolute;left:295px;top:396px;width:16px;height:16px;background:#fff;border:1px solid #b3b3b3;border-radius:3px"></div>
<div style="position:absolute;top:395.80px;line-height:20px;font-size:13px;font-weight:400;color:#1f1f1f;white-space:nowrap;left:145.00px;width:400px;text-align:center;">53</div>
<div style="position:absolute;top:395.80px;line-height:20px;font-size:13px;font-weight:400;color:#1f1f1f;white-space:nowrap;letter-spacing:-0.249px;left:381px;">Chưa chuẩn hóa</div>
<div style="position:absolute;left:511.5px;top:402.5px;width:5px;height:5px;background:#4262ea;border-radius:3px"></div>
<div style="position:absolute;top:395.80px;line-height:20px;font-size:13px;font-weight:400;color:#1f1f1f;white-space:nowrap;letter-spacing:-0.228px;left:527px;">Đang sử dụng</div>
<div style="position:absolute;left:694px;top:397px;width:1px;height:26px;border-left:1px dotted #8a8a8a"></div>
<div style="position:absolute;left:695px;top:410px;width:11px;height:1px;border-top:1px dotted #8a8a8a"></div>
<div style="position:absolute;top:395.80px;line-height:20px;font-size:13px;font-weight:400;color:#1f1f1f;white-space:nowrap;letter-spacing:-0.23px;left:711px;">AMTHANH</div>
<div style="position:absolute;top:395.80px;line-height:20px;font-size:13px;font-weight:400;color:#1f1f1f;white-space:nowrap;letter-spacing:-0.194px;left:861px;">Loa SONY</div>
<div style="position:absolute;top:395.80px;line-height:20px;font-size:13px;font-weight:400;color:#1f1f1f;white-space:nowrap;letter-spacing:-0.163px;right:381.66px;text-align:right;">25.000.000 Đ</div>
<div style="position:absolute;top:395.80px;line-height:20px;font-size:13px;font-weight:400;color:#1f1f1f;white-space:nowrap;right:261.00px;text-align:right;">1</div>
<div style="position:absolute;top:395.80px;line-height:20px;font-size:13px;font-weight:400;color:#1f1f1f;white-space:nowrap;right:128.00px;text-align:right;">5.000.000</div>
<div style="position:absolute;left:288px;top:457px;width:1271px;height:1px;background:#e4e4e4"></div>
<div style="position:absolute;left:295px;top:431px;width:16px;height:16px;background:#fff;border:1px solid #b3b3b3;border-radius:3px"></div>
<div style="position:absolute;top:430.80px;line-height:20px;font-size:13px;font-weight:400;color:#1f1f1f;white-space:nowrap;left:145.00px;width:400px;text-align:center;">54</div>
<div style="position:absolute;top:430.80px;line-height:20px;font-size:13px;font-weight:400;color:#1f1f1f;white-space:nowrap;letter-spacing:-0.249px;left:381px;">Chưa chuẩn hóa</div>
<div style="position:absolute;left:511.5px;top:437.5px;width:5px;height:5px;background:#4262ea;border-radius:3px"></div>
<div style="position:absolute;top:430.80px;line-height:20px;font-size:13px;font-weight:400;color:#1f1f1f;white-space:nowrap;letter-spacing:-0.228px;left:527px;">Đang sử dụng</div>
<div style="position:absolute;left:694px;top:432px;width:1px;height:26px;border-left:1px dotted #8a8a8a"></div>
<div style="position:absolute;left:695px;top:445px;width:11px;height:1px;border-top:1px dotted #8a8a8a"></div>
<div style="position:absolute;top:430.80px;line-height:20px;font-size:13px;font-weight:400;color:#1f1f1f;white-space:nowrap;letter-spacing:-0.188px;left:711px;">TS000026</div>
<div style="position:absolute;top:430.80px;line-height:20px;font-size:13px;font-weight:400;color:#1f1f1f;white-space:nowrap;letter-spacing:-0.193px;left:861px;">TSc</div>
<div style="position:absolute;top:430.80px;line-height:20px;font-size:13px;font-weight:400;color:#1f1f1f;white-space:nowrap;letter-spacing:-0.164px;right:381.66px;text-align:right;">100.000.000 Đ</div>
<div style="position:absolute;top:430.80px;line-height:20px;font-size:13px;font-weight:400;color:#1f1f1f;white-space:nowrap;right:261.00px;text-align:right;">1</div>
<div style="position:absolute;top:430.80px;line-height:20px;font-size:13px;font-weight:400;color:#1f1f1f;white-space:nowrap;right:128.00px;text-align:right;">0</div>
<div style="position:absolute;left:288px;top:492px;width:1271px;height:1px;background:#e4e4e4"></div>
<div style="position:absolute;left:295px;top:466px;width:16px;height:16px;background:#fff;border:1px solid #b3b3b3;border-radius:3px"></div>
<div style="position:absolute;top:465.80px;line-height:20px;font-size:13px;font-weight:400;color:#1f1f1f;white-space:nowrap;left:145.00px;width:400px;text-align:center;">55</div>
<div style="position:absolute;top:465.80px;line-height:20px;font-size:13px;font-weight:400;color:#1f1f1f;white-space:nowrap;letter-spacing:-0.249px;left:381px;">Chưa chuẩn hóa</div>
<div style="position:absolute;left:511.5px;top:472.5px;width:5px;height:5px;background:#4262ea;border-radius:3px"></div>
<div style="position:absolute;top:465.80px;line-height:20px;font-size:13px;font-weight:400;color:#1f1f1f;white-space:nowrap;letter-spacing:-0.228px;left:527px;">Đang sử dụng</div>
<div style="position:absolute;left:694px;top:467px;width:1px;height:26px;border-left:1px dotted #8a8a8a"></div>
<div style="position:absolute;left:695px;top:480px;width:11px;height:1px;border-top:1px dotted #8a8a8a"></div>
<div style="position:absolute;top:465.80px;line-height:20px;font-size:13px;font-weight:400;color:#1f1f1f;white-space:nowrap;letter-spacing:-0.188px;left:711px;">TS50222</div>
<div style="position:absolute;top:465.80px;line-height:20px;font-size:13px;font-weight:400;color:#1f1f1f;white-space:nowrap;letter-spacing:-0.171px;left:861px;">Máy chuyên dụng</div>
<div style="position:absolute;top:465.80px;line-height:20px;font-size:13px;font-weight:400;color:#1f1f1f;white-space:nowrap;letter-spacing:-0.163px;right:381.66px;text-align:right;">35.000.000 Đ</div>
<div style="position:absolute;top:465.80px;line-height:20px;font-size:13px;font-weight:400;color:#1f1f1f;white-space:nowrap;right:261.00px;text-align:right;">1</div>
<div style="position:absolute;top:465.80px;line-height:20px;font-size:13px;font-weight:400;color:#1f1f1f;white-space:nowrap;right:128.00px;text-align:right;">0</div>
<div style="position:absolute;left:288px;top:527px;width:1271px;height:1px;background:#e4e4e4"></div>
<div style="position:absolute;left:295px;top:501px;width:16px;height:16px;background:#fff;border:1px solid #b3b3b3;border-radius:3px"></div>
<div style="position:absolute;top:500.80px;line-height:20px;font-size:13px;font-weight:400;color:#1f1f1f;white-space:nowrap;left:145.00px;width:400px;text-align:center;">56</div>
<div style="position:absolute;top:500.80px;line-height:20px;font-size:13px;font-weight:400;color:#1f1f1f;white-space:nowrap;letter-spacing:-0.249px;left:381px;">Chưa chuẩn hóa</div>
<div style="position:absolute;left:511.5px;top:507.5px;width:5px;height:5px;background:#4262ea;border-radius:3px"></div>
<div style="position:absolute;top:500.80px;line-height:20px;font-size:13px;font-weight:400;color:#1f1f1f;white-space:nowrap;letter-spacing:-0.228px;left:527px;">Đang sử dụng</div>
<div style="position:absolute;left:694px;top:502px;width:1px;height:26px;border-left:1px dotted #8a8a8a"></div>
<div style="position:absolute;left:695px;top:515px;width:11px;height:1px;border-top:1px dotted #8a8a8a"></div>
<div style="position:absolute;top:500.80px;line-height:20px;font-size:13px;font-weight:400;color:#1f1f1f;white-space:nowrap;letter-spacing:-0.188px;left:711px;">TS000021</div>
<div style="position:absolute;top:500.80px;line-height:20px;font-size:13px;font-weight:400;color:#1f1f1f;white-space:nowrap;letter-spacing:-0.177px;left:861px;">Nhà để xe CBNV</div>
<div style="position:absolute;top:500.80px;line-height:20px;font-size:13px;font-weight:400;color:#1f1f1f;white-space:nowrap;letter-spacing:-0.164px;right:381.66px;text-align:right;">689.000.000 Đ</div>
<div style="position:absolute;top:500.80px;line-height:20px;font-size:13px;font-weight:400;color:#1f1f1f;white-space:nowrap;right:261.00px;text-align:right;">1</div>
<div style="position:absolute;top:500.80px;line-height:20px;font-size:13px;font-weight:400;color:#1f1f1f;white-space:nowrap;right:128.00px;text-align:right;">0</div>
<div style="position:absolute;left:288px;top:562px;width:1271px;height:1px;background:#e4e4e4"></div>
<div style="position:absolute;left:295px;top:536px;width:16px;height:16px;background:#fff;border:1px solid #b3b3b3;border-radius:3px"></div>
<div style="position:absolute;top:535.80px;line-height:20px;font-size:13px;font-weight:400;color:#1f1f1f;white-space:nowrap;left:145.00px;width:400px;text-align:center;">57</div>
<div style="position:absolute;top:535.80px;line-height:20px;font-size:13px;font-weight:400;color:#1f1f1f;white-space:nowrap;letter-spacing:-0.249px;left:381px;">Chưa chuẩn hóa</div>
<div style="position:absolute;left:511.5px;top:542.5px;width:5px;height:5px;background:#4262ea;border-radius:3px"></div>
<div style="position:absolute;top:535.80px;line-height:20px;font-size:13px;font-weight:400;color:#1f1f1f;white-space:nowrap;letter-spacing:-0.228px;left:527px;">Đang sử dụng</div>
<div style="position:absolute;left:694px;top:537px;width:1px;height:26px;border-left:1px dotted #8a8a8a"></div>
<div style="position:absolute;left:695px;top:550px;width:11px;height:1px;border-top:1px dotted #8a8a8a"></div>
<div style="position:absolute;top:535.80px;line-height:20px;font-size:13px;font-weight:400;color:#1f1f1f;white-space:nowrap;letter-spacing:-0.188px;left:711px;">TS000020</div>
<div style="position:absolute;top:535.80px;line-height:20px;font-size:13px;font-weight:400;color:#1f1f1f;white-space:nowrap;letter-spacing:-0.143px;left:861px;">Đất trụ sở làm việc</div>
<div style="position:absolute;top:535.80px;line-height:20px;font-size:13px;font-weight:400;color:#1f1f1f;white-space:nowrap;letter-spacing:-0.16px;right:381.66px;text-align:right;">1.000.000.000 Đ</div>
<div style="position:absolute;top:535.80px;line-height:20px;font-size:13px;font-weight:400;color:#1f1f1f;white-space:nowrap;right:261.00px;text-align:right;">1</div>
<div style="position:absolute;top:535.80px;line-height:20px;font-size:13px;font-weight:400;color:#1f1f1f;white-space:nowrap;right:128.00px;text-align:right;">0</div>
<div style="position:absolute;left:288px;top:597px;width:1271px;height:1px;background:#e4e4e4"></div>
<div style="position:absolute;left:295px;top:571px;width:16px;height:16px;background:#fff;border:1px solid #b3b3b3;border-radius:3px"></div>
<div style="position:absolute;top:570.80px;line-height:20px;font-size:13px;font-weight:400;color:#1f1f1f;white-space:nowrap;left:145.00px;width:400px;text-align:center;">58</div>
<div style="position:absolute;top:570.80px;line-height:20px;font-size:13px;font-weight:400;color:#1f1f1f;white-space:nowrap;letter-spacing:-0.249px;left:381px;">Chưa chuẩn hóa</div>
<div style="position:absolute;left:511.5px;top:577.5px;width:5px;height:5px;background:#4262ea;border-radius:3px"></div>
<div style="position:absolute;top:570.80px;line-height:20px;font-size:13px;font-weight:400;color:#1f1f1f;white-space:nowrap;letter-spacing:-0.228px;left:527px;">Đang sử dụng</div>
<div style="position:absolute;left:694px;top:572px;width:1px;height:26px;border-left:1px dotted #8a8a8a"></div>
<div style="position:absolute;left:695px;top:585px;width:11px;height:1px;border-top:1px dotted #8a8a8a"></div>
<div style="position:absolute;top:570.80px;line-height:20px;font-size:13px;font-weight:400;color:#1f1f1f;white-space:nowrap;letter-spacing:-0.188px;left:711px;">TS000010</div>
<div style="position:absolute;top:570.80px;line-height:20px;font-size:13px;font-weight:400;color:#1f1f1f;white-space:nowrap;letter-spacing:-0.159px;left:861px;">Đất nhà văn hóa</div>
<div style="position:absolute;top:570.80px;line-height:20px;font-size:13px;font-weight:400;color:#1f1f1f;white-space:nowrap;letter-spacing:-0.164px;right:381.66px;text-align:right;">950.000.000 Đ</div>
<div style="position:absolute;top:570.80px;line-height:20px;font-size:13px;font-weight:400;color:#1f1f1f;white-space:nowrap;right:261.00px;text-align:right;">1</div>
<div style="position:absolute;top:570.80px;line-height:20px;font-size:13px;font-weight:400;color:#1f1f1f;white-space:nowrap;right:128.00px;text-align:right;">0</div>
<div style="position:absolute;left:288px;top:632px;width:1271px;height:1px;background:#e4e4e4"></div>
<div style="position:absolute;left:295px;top:606px;width:16px;height:16px;background:#fff;border:1px solid #b3b3b3;border-radius:3px"></div>
<div style="position:absolute;top:605.80px;line-height:20px;font-size:13px;font-weight:400;color:#1f1f1f;white-space:nowrap;left:145.00px;width:400px;text-align:center;">59</div>
<div style="position:absolute;top:605.80px;line-height:20px;font-size:13px;font-weight:400;color:#1f1f1f;white-space:nowrap;letter-spacing:-0.249px;left:381px;">Chưa chuẩn hóa</div>
<div style="position:absolute;left:511.5px;top:612.5px;width:5px;height:5px;background:#4262ea;border-radius:3px"></div>
<div style="position:absolute;top:605.80px;line-height:20px;font-size:13px;font-weight:400;color:#1f1f1f;white-space:nowrap;letter-spacing:-0.228px;left:527px;">Đang sử dụng</div>
<div style="position:absolute;left:694px;top:607px;width:1px;height:26px;border-left:1px dotted #8a8a8a"></div>
<div style="position:absolute;left:695px;top:620px;width:11px;height:1px;border-top:1px dotted #8a8a8a"></div>
<div style="position:absolute;top:605.80px;line-height:20px;font-size:13px;font-weight:400;color:#1f1f1f;white-space:nowrap;letter-spacing:-0.188px;left:711px;">TS000009</div>
<div style="position:absolute;top:605.80px;line-height:20px;font-size:13px;font-weight:400;color:#1f1f1f;white-space:nowrap;letter-spacing:-0.158px;left:861px;">Đất xây trường1</div>
<div style="position:absolute;top:605.80px;line-height:20px;font-size:13px;font-weight:400;color:#1f1f1f;white-space:nowrap;letter-spacing:-0.16px;right:381.66px;text-align:right;">1.050.000.000 Đ</div>
<div style="position:absolute;top:605.80px;line-height:20px;font-size:13px;font-weight:400;color:#1f1f1f;white-space:nowrap;right:261.00px;text-align:right;">1</div>
<div style="position:absolute;top:605.80px;line-height:20px;font-size:13px;font-weight:400;color:#1f1f1f;white-space:nowrap;right:128.00px;text-align:right;">0</div>
<div style="position:absolute;left:320px;top:163px;width:1px;height:505px;background:#e4e4e4"></div>
<div style="position:absolute;left:370px;top:163px;width:1px;height:505px;background:#e4e4e4"></div>
<div style="position:absolute;left:500px;top:163px;width:1px;height:505px;background:#e4e4e4"></div>
<div style="position:absolute;left:680px;top:163px;width:1px;height:505px;background:#e4e4e4"></div>
<div style="position:absolute;left:850px;top:163px;width:1px;height:505px;background:#e4e4e4"></div>
<div style="position:absolute;left:1050px;top:163px;width:1px;height:505px;background:#e4e4e4"></div>
<div style="position:absolute;left:1210px;top:163px;width:1px;height:505px;background:#e4e4e4"></div>
<div style="position:absolute;left:1330px;top:163px;width:1px;height:505px;background:#e4e4e4"></div>
<div style="position:absolute;left:1456px;top:163px;width:1px;height:505px;background:#e4e4e4"></div>
<div style="position:absolute;left:1457px;top:143px;width:102px;height:34px;background:#fff"></div>
<svg style="position:absolute;left:1470.5px;top:153px;" width="16" height="16" viewBox="0 0 16 16" fill="none"><path d="M5.400 7.700H4.300A2.100 2.100 0 0 0 2.200 9.800v2.400a2.100 2.100 0 0 0 2.100 2.100h7.700a2.100 2.100 0 0 0 2.100-2.100V9.700" stroke="#4262ea" stroke-width="1.300" stroke-linecap="round"/>
<path d="M4.600 11.200 L5.400 8.830 L11.890 2.820 L13.520 4.580 L7.030 10.590 Z" stroke="#4262ea" stroke-width="1.200" stroke-linejoin="round"/></svg>
<svg style="position:absolute;left:1502px;top:151.9px;" width="18" height="20" viewBox="0 0 18 20" fill="none"><path d="M12.500 3.300V3.200A2.700 2.700 0 0 0 9.800 .7H4A2.700 2.700 0 0 0 1.300 3.400v9A2.700 2.700 0 0 0 4 15.100h.2" stroke="#555" stroke-width="1.200" stroke-linecap="round"/>
<rect x="4.700" y="3.700" width="11.600" height="14.800" rx="3" stroke="#555" stroke-width="1.200"/>
<path d="M8.600 8.900h2.600M8.600 12h4.400M8.600 14.900h4.400" stroke="#555" stroke-width="1.100" stroke-linecap="round"/></svg>
<svg style="position:absolute;left:1539px;top:153.35px;" width="6" height="16" viewBox="0 0 6 16" fill="none"><circle cx="3" cy="2.800" r="1.100" fill="#3a3a3a"/><circle cx="3" cy="8" r="1.100" fill="#3a3a3a"/><circle cx="3" cy="13.200" r="1.100" fill="#3a3a3a"/></svg>
<div style="position:absolute;left:1457px;top:178px;width:102px;height:34px;background:#fff"></div>
<svg style="position:absolute;left:1470.5px;top:188px;" width="16" height="16" viewBox="0 0 16 16" fill="none"><path d="M5.400 7.700H4.300A2.100 2.100 0 0 0 2.200 9.800v2.400a2.100 2.100 0 0 0 2.100 2.100h7.700a2.100 2.100 0 0 0 2.100-2.100V9.700" stroke="#4262ea" stroke-width="1.300" stroke-linecap="round"/>
<path d="M4.600 11.200 L5.400 8.830 L11.890 2.820 L13.520 4.580 L7.030 10.590 Z" stroke="#4262ea" stroke-width="1.200" stroke-linejoin="round"/></svg>
<svg style="position:absolute;left:1502px;top:186.9px;" width="18" height="20" viewBox="0 0 18 20" fill="none"><path d="M12.500 3.300V3.200A2.700 2.700 0 0 0 9.800 .7H4A2.700 2.700 0 0 0 1.300 3.400v9A2.700 2.700 0 0 0 4 15.100h.2" stroke="#555" stroke-width="1.200" stroke-linecap="round"/>
<rect x="4.700" y="3.700" width="11.600" height="14.800" rx="3" stroke="#555" stroke-width="1.200"/>
<path d="M8.600 8.900h2.600M8.600 12h4.400M8.600 14.900h4.400" stroke="#555" stroke-width="1.100" stroke-linecap="round"/></svg>
<svg style="position:absolute;left:1539px;top:188.35px;" width="6" height="16" viewBox="0 0 6 16" fill="none"><circle cx="3" cy="2.800" r="1.100" fill="#3a3a3a"/><circle cx="3" cy="8" r="1.100" fill="#3a3a3a"/><circle cx="3" cy="13.200" r="1.100" fill="#3a3a3a"/></svg>
<div style="position:absolute;left:1457px;top:213px;width:102px;height:34px;background:#fff"></div>
<svg style="position:absolute;left:1470.5px;top:223px;" width="16" height="16" viewBox="0 0 16 16" fill="none"><path d="M5.400 7.700H4.300A2.100 2.100 0 0 0 2.200 9.800v2.400a2.100 2.100 0 0 0 2.100 2.100h7.700a2.100 2.100 0 0 0 2.100-2.100V9.700" stroke="#4262ea" stroke-width="1.300" stroke-linecap="round"/>
<path d="M4.600 11.200 L5.400 8.830 L11.890 2.820 L13.520 4.580 L7.030 10.590 Z" stroke="#4262ea" stroke-width="1.200" stroke-linejoin="round"/></svg>
<svg style="position:absolute;left:1502px;top:221.9px;" width="18" height="20" viewBox="0 0 18 20" fill="none"><path d="M12.500 3.300V3.200A2.700 2.700 0 0 0 9.800 .7H4A2.700 2.700 0 0 0 1.300 3.400v9A2.700 2.700 0 0 0 4 15.100h.2" stroke="#555" stroke-width="1.200" stroke-linecap="round"/>
<rect x="4.700" y="3.700" width="11.600" height="14.800" rx="3" stroke="#555" stroke-width="1.200"/>
<path d="M8.600 8.900h2.600M8.600 12h4.400M8.600 14.900h4.400" stroke="#555" stroke-width="1.100" stroke-linecap="round"/></svg>
<svg style="position:absolute;left:1539px;top:223.35px;" width="6" height="16" viewBox="0 0 6 16" fill="none"><circle cx="3" cy="2.800" r="1.100" fill="#3a3a3a"/><circle cx="3" cy="8" r="1.100" fill="#3a3a3a"/><circle cx="3" cy="13.200" r="1.100" fill="#3a3a3a"/></svg>
<div style="position:absolute;left:1457px;top:248px;width:102px;height:34px;background:#fff"></div>
<svg style="position:absolute;left:1470.5px;top:258px;" width="16" height="16" viewBox="0 0 16 16" fill="none"><path d="M5.400 7.700H4.300A2.100 2.100 0 0 0 2.200 9.800v2.400a2.100 2.100 0 0 0 2.100 2.100h7.700a2.100 2.100 0 0 0 2.100-2.100V9.700" stroke="#4262ea" stroke-width="1.300" stroke-linecap="round"/>
<path d="M4.600 11.200 L5.400 8.830 L11.890 2.820 L13.520 4.580 L7.030 10.590 Z" stroke="#4262ea" stroke-width="1.200" stroke-linejoin="round"/></svg>
<svg style="position:absolute;left:1502px;top:256.9px;" width="18" height="20" viewBox="0 0 18 20" fill="none"><path d="M12.500 3.300V3.200A2.700 2.700 0 0 0 9.800 .7H4A2.700 2.700 0 0 0 1.300 3.400v9A2.700 2.700 0 0 0 4 15.100h.2" stroke="#555" stroke-width="1.200" stroke-linecap="round"/>
<rect x="4.700" y="3.700" width="11.600" height="14.800" rx="3" stroke="#555" stroke-width="1.200"/>
<path d="M8.600 8.900h2.600M8.600 12h4.400M8.600 14.900h4.400" stroke="#555" stroke-width="1.100" stroke-linecap="round"/></svg>
<svg style="position:absolute;left:1539px;top:258.35px;" width="6" height="16" viewBox="0 0 6 16" fill="none"><circle cx="3" cy="2.800" r="1.100" fill="#3a3a3a"/><circle cx="3" cy="8" r="1.100" fill="#3a3a3a"/><circle cx="3" cy="13.200" r="1.100" fill="#3a3a3a"/></svg>
<div style="position:absolute;left:1457px;top:283px;width:102px;height:34px;background:#fff"></div>
<svg style="position:absolute;left:1470.5px;top:293px;" width="16" height="16" viewBox="0 0 16 16" fill="none"><path d="M5.400 7.700H4.300A2.100 2.100 0 0 0 2.200 9.800v2.400a2.100 2.100 0 0 0 2.100 2.100h7.700a2.100 2.100 0 0 0 2.100-2.100V9.700" stroke="#4262ea" stroke-width="1.300" stroke-linecap="round"/>
<path d="M4.600 11.200 L5.400 8.830 L11.890 2.820 L13.520 4.580 L7.030 10.590 Z" stroke="#4262ea" stroke-width="1.200" stroke-linejoin="round"/></svg>
<svg style="position:absolute;left:1502px;top:291.9px;" width="18" height="20" viewBox="0 0 18 20" fill="none"><path d="M12.500 3.300V3.200A2.700 2.700 0 0 0 9.800 .7H4A2.700 2.700 0 0 0 1.300 3.400v9A2.700 2.700 0 0 0 4 15.100h.2" stroke="#555" stroke-width="1.200" stroke-linecap="round"/>
<rect x="4.700" y="3.700" width="11.600" height="14.800" rx="3" stroke="#555" stroke-width="1.200"/>
<path d="M8.600 8.900h2.600M8.600 12h4.400M8.600 14.900h4.400" stroke="#555" stroke-width="1.100" stroke-linecap="round"/></svg>
<svg style="position:absolute;left:1539px;top:293.35px;" width="6" height="16" viewBox="0 0 6 16" fill="none"><circle cx="3" cy="2.800" r="1.100" fill="#3a3a3a"/><circle cx="3" cy="8" r="1.100" fill="#3a3a3a"/><circle cx="3" cy="13.200" r="1.100" fill="#3a3a3a"/></svg>
<div style="position:absolute;left:1457px;top:318px;width:102px;height:34px;background:#fff"></div>
<svg style="position:absolute;left:1470.5px;top:328px;" width="16" height="16" viewBox="0 0 16 16" fill="none"><path d="M5.400 7.700H4.300A2.100 2.100 0 0 0 2.200 9.800v2.400a2.100 2.100 0 0 0 2.100 2.100h7.700a2.100 2.100 0 0 0 2.100-2.100V9.700" stroke="#4262ea" stroke-width="1.300" stroke-linecap="round"/>
<path d="M4.600 11.200 L5.400 8.830 L11.890 2.820 L13.520 4.580 L7.030 10.590 Z" stroke="#4262ea" stroke-width="1.200" stroke-linejoin="round"/></svg>
<svg style="position:absolute;left:1502px;top:326.9px;" width="18" height="20" viewBox="0 0 18 20" fill="none"><path d="M12.500 3.300V3.200A2.700 2.700 0 0 0 9.800 .7H4A2.700 2.700 0 0 0 1.300 3.400v9A2.700 2.700 0 0 0 4 15.100h.2" stroke="#555" stroke-width="1.200" stroke-linecap="round"/>
<rect x="4.700" y="3.700" width="11.600" height="14.800" rx="3" stroke="#555" stroke-width="1.200"/>
<path d="M8.600 8.900h2.600M8.600 12h4.400M8.600 14.900h4.400" stroke="#555" stroke-width="1.100" stroke-linecap="round"/></svg>
<svg style="position:absolute;left:1539px;top:328.35px;" width="6" height="16" viewBox="0 0 6 16" fill="none"><circle cx="3" cy="2.800" r="1.100" fill="#3a3a3a"/><circle cx="3" cy="8" r="1.100" fill="#3a3a3a"/><circle cx="3" cy="13.200" r="1.100" fill="#3a3a3a"/></svg>
<div style="position:absolute;left:1457px;top:353px;width:102px;height:34px;background:#e8eafc"></div>
<div style="position:absolute;left:1465px;top:357px;width:26px;height:26px;background:#fff;border-radius:13px"></div>
<div style="position:absolute;left:1498px;top:357px;width:26px;height:26px;background:#fff;border-radius:13px"></div>
<div style="position:absolute;left:1529px;top:357px;width:26px;height:26px;background:#fff;border-radius:13px"></div>
<svg style="position:absolute;left:1470.5px;top:363px;" width="16" height="16" viewBox="0 0 16 16" fill="none"><path d="M5.400 7.700H4.300A2.100 2.100 0 0 0 2.200 9.800v2.400a2.100 2.100 0 0 0 2.100 2.100h7.700a2.100 2.100 0 0 0 2.100-2.100V9.700" stroke="#4262ea" stroke-width="1.300" stroke-linecap="round"/>
<path d="M4.600 11.200 L5.400 8.830 L11.890 2.820 L13.520 4.580 L7.030 10.590 Z" stroke="#4262ea" stroke-width="1.200" stroke-linejoin="round"/></svg>
<svg style="position:absolute;left:1502px;top:361.9px;" width="18" height="20" viewBox="0 0 18 20" fill="none"><path d="M12.500 3.300V3.200A2.700 2.700 0 0 0 9.800 .7H4A2.700 2.700 0 0 0 1.300 3.400v9A2.700 2.700 0 0 0 4 15.100h.2" stroke="#555" stroke-width="1.200" stroke-linecap="round"/>
<rect x="4.700" y="3.700" width="11.600" height="14.800" rx="3" stroke="#555" stroke-width="1.200"/>
<path d="M8.600 8.900h2.600M8.600 12h4.400M8.600 14.900h4.400" stroke="#555" stroke-width="1.100" stroke-linecap="round"/></svg>
<svg style="position:absolute;left:1539px;top:363.35px;" width="6" height="16" viewBox="0 0 6 16" fill="none"><circle cx="3" cy="2.800" r="1.100" fill="#3a3a3a"/><circle cx="3" cy="8" r="1.100" fill="#3a3a3a"/><circle cx="3" cy="13.200" r="1.100" fill="#3a3a3a"/></svg>
<div style="position:absolute;left:1457px;top:388px;width:102px;height:34px;background:#fff"></div>
<svg style="position:absolute;left:1470.5px;top:398px;" width="16" height="16" viewBox="0 0 16 16" fill="none"><path d="M5.400 7.700H4.300A2.100 2.100 0 0 0 2.200 9.800v2.400a2.100 2.100 0 0 0 2.100 2.100h7.700a2.100 2.100 0 0 0 2.100-2.100V9.700" stroke="#4262ea" stroke-width="1.300" stroke-linecap="round"/>
<path d="M4.600 11.200 L5.400 8.830 L11.890 2.820 L13.520 4.580 L7.030 10.590 Z" stroke="#4262ea" stroke-width="1.200" stroke-linejoin="round"/></svg>
<svg style="position:absolute;left:1502px;top:396.9px;" width="18" height="20" viewBox="0 0 18 20" fill="none"><path d="M12.500 3.300V3.200A2.700 2.700 0 0 0 9.800 .7H4A2.700 2.700 0 0 0 1.300 3.400v9A2.700 2.700 0 0 0 4 15.100h.2" stroke="#555" stroke-width="1.200" stroke-linecap="round"/>
<rect x="4.700" y="3.700" width="11.600" height="14.800" rx="3" stroke="#555" stroke-width="1.200"/>
<path d="M8.600 8.900h2.600M8.600 12h4.400M8.600 14.900h4.400" stroke="#555" stroke-width="1.100" stroke-linecap="round"/></svg>
<svg style="position:absolute;left:1539px;top:398.35px;" width="6" height="16" viewBox="0 0 6 16" fill="none"><circle cx="3" cy="2.800" r="1.100" fill="#3a3a3a"/><circle cx="3" cy="8" r="1.100" fill="#3a3a3a"/><circle cx="3" cy="13.200" r="1.100" fill="#3a3a3a"/></svg>
<div style="position:absolute;left:1457px;top:423px;width:102px;height:34px;background:#fff"></div>
<svg style="position:absolute;left:1470.5px;top:433px;" width="16" height="16" viewBox="0 0 16 16" fill="none"><path d="M5.400 7.700H4.300A2.100 2.100 0 0 0 2.200 9.800v2.400a2.100 2.100 0 0 0 2.100 2.100h7.700a2.100 2.100 0 0 0 2.100-2.100V9.700" stroke="#4262ea" stroke-width="1.300" stroke-linecap="round"/>
<path d="M4.600 11.200 L5.400 8.830 L11.890 2.820 L13.520 4.580 L7.030 10.590 Z" stroke="#4262ea" stroke-width="1.200" stroke-linejoin="round"/></svg>
<svg style="position:absolute;left:1502px;top:431.9px;" width="18" height="20" viewBox="0 0 18 20" fill="none"><path d="M12.500 3.300V3.200A2.700 2.700 0 0 0 9.800 .7H4A2.700 2.700 0 0 0 1.300 3.400v9A2.700 2.700 0 0 0 4 15.100h.2" stroke="#555" stroke-width="1.200" stroke-linecap="round"/>
<rect x="4.700" y="3.700" width="11.600" height="14.800" rx="3" stroke="#555" stroke-width="1.200"/>
<path d="M8.600 8.900h2.600M8.600 12h4.400M8.600 14.900h4.400" stroke="#555" stroke-width="1.100" stroke-linecap="round"/></svg>
<svg style="position:absolute;left:1539px;top:433.35px;" width="6" height="16" viewBox="0 0 6 16" fill="none"><circle cx="3" cy="2.800" r="1.100" fill="#3a3a3a"/><circle cx="3" cy="8" r="1.100" fill="#3a3a3a"/><circle cx="3" cy="13.200" r="1.100" fill="#3a3a3a"/></svg>
<div style="position:absolute;left:1457px;top:458px;width:102px;height:34px;background:#fff"></div>
<svg style="position:absolute;left:1470.5px;top:468px;" width="16" height="16" viewBox="0 0 16 16" fill="none"><path d="M5.400 7.700H4.300A2.100 2.100 0 0 0 2.200 9.800v2.400a2.100 2.100 0 0 0 2.100 2.100h7.700a2.100 2.100 0 0 0 2.100-2.100V9.700" stroke="#4262ea" stroke-width="1.300" stroke-linecap="round"/>
<path d="M4.600 11.200 L5.400 8.830 L11.890 2.820 L13.520 4.580 L7.030 10.590 Z" stroke="#4262ea" stroke-width="1.200" stroke-linejoin="round"/></svg>
<svg style="position:absolute;left:1502px;top:466.9px;" width="18" height="20" viewBox="0 0 18 20" fill="none"><path d="M12.500 3.300V3.200A2.700 2.700 0 0 0 9.800 .7H4A2.700 2.700 0 0 0 1.300 3.400v9A2.700 2.700 0 0 0 4 15.100h.2" stroke="#555" stroke-width="1.200" stroke-linecap="round"/>
<rect x="4.700" y="3.700" width="11.600" height="14.800" rx="3" stroke="#555" stroke-width="1.200"/>
<path d="M8.600 8.900h2.600M8.600 12h4.400M8.600 14.900h4.400" stroke="#555" stroke-width="1.100" stroke-linecap="round"/></svg>
<svg style="position:absolute;left:1539px;top:468.35px;" width="6" height="16" viewBox="0 0 6 16" fill="none"><circle cx="3" cy="2.800" r="1.100" fill="#3a3a3a"/><circle cx="3" cy="8" r="1.100" fill="#3a3a3a"/><circle cx="3" cy="13.200" r="1.100" fill="#3a3a3a"/></svg>
<div style="position:absolute;left:1457px;top:493px;width:102px;height:34px;background:#fff"></div>
<svg style="position:absolute;left:1470.5px;top:503px;" width="16" height="16" viewBox="0 0 16 16" fill="none"><path d="M5.400 7.700H4.300A2.100 2.100 0 0 0 2.200 9.800v2.400a2.100 2.100 0 0 0 2.100 2.100h7.700a2.100 2.100 0 0 0 2.100-2.100V9.700" stroke="#4262ea" stroke-width="1.300" stroke-linecap="round"/>
<path d="M4.600 11.200 L5.400 8.830 L11.890 2.820 L13.520 4.580 L7.030 10.590 Z" stroke="#4262ea" stroke-width="1.200" stroke-linejoin="round"/></svg>
<svg style="position:absolute;left:1502px;top:501.9px;" width="18" height="20" viewBox="0 0 18 20" fill="none"><path d="M12.500 3.300V3.200A2.700 2.700 0 0 0 9.800 .7H4A2.700 2.700 0 0 0 1.300 3.400v9A2.700 2.700 0 0 0 4 15.100h.2" stroke="#555" stroke-width="1.200" stroke-linecap="round"/>
<rect x="4.700" y="3.700" width="11.600" height="14.800" rx="3" stroke="#555" stroke-width="1.200"/>
<path d="M8.600 8.900h2.600M8.600 12h4.400M8.600 14.900h4.400" stroke="#555" stroke-width="1.100" stroke-linecap="round"/></svg>
<svg style="position:absolute;left:1539px;top:503.35px;" width="6" height="16" viewBox="0 0 6 16" fill="none"><circle cx="3" cy="2.800" r="1.100" fill="#3a3a3a"/><circle cx="3" cy="8" r="1.100" fill="#3a3a3a"/><circle cx="3" cy="13.200" r="1.100" fill="#3a3a3a"/></svg>
<div style="position:absolute;left:1457px;top:528px;width:102px;height:34px;background:#fff"></div>
<svg style="position:absolute;left:1470.5px;top:538px;" width="16" height="16" viewBox="0 0 16 16" fill="none"><path d="M5.400 7.700H4.300A2.100 2.100 0 0 0 2.200 9.800v2.400a2.100 2.100 0 0 0 2.100 2.100h7.700a2.100 2.100 0 0 0 2.100-2.100V9.700" stroke="#4262ea" stroke-width="1.300" stroke-linecap="round"/>
<path d="M4.600 11.200 L5.400 8.830 L11.890 2.820 L13.520 4.580 L7.030 10.590 Z" stroke="#4262ea" stroke-width="1.200" stroke-linejoin="round"/></svg>
<svg style="position:absolute;left:1502px;top:536.9px;" width="18" height="20" viewBox="0 0 18 20" fill="none"><path d="M12.500 3.300V3.200A2.700 2.700 0 0 0 9.800 .7H4A2.700 2.700 0 0 0 1.300 3.400v9A2.700 2.700 0 0 0 4 15.100h.2" stroke="#555" stroke-width="1.200" stroke-linecap="round"/>
<rect x="4.700" y="3.700" width="11.600" height="14.800" rx="3" stroke="#555" stroke-width="1.200"/>
<path d="M8.600 8.900h2.600M8.600 12h4.400M8.600 14.900h4.400" stroke="#555" stroke-width="1.100" stroke-linecap="round"/></svg>
<svg style="position:absolute;left:1539px;top:538.35px;" width="6" height="16" viewBox="0 0 6 16" fill="none"><circle cx="3" cy="2.800" r="1.100" fill="#3a3a3a"/><circle cx="3" cy="8" r="1.100" fill="#3a3a3a"/><circle cx="3" cy="13.200" r="1.100" fill="#3a3a3a"/></svg>
<div style="position:absolute;left:1457px;top:563px;width:102px;height:34px;background:#fff"></div>
<svg style="position:absolute;left:1470.5px;top:573px;" width="16" height="16" viewBox="0 0 16 16" fill="none"><path d="M5.400 7.700H4.300A2.100 2.100 0 0 0 2.200 9.800v2.400a2.100 2.100 0 0 0 2.100 2.100h7.700a2.100 2.100 0 0 0 2.100-2.100V9.700" stroke="#4262ea" stroke-width="1.300" stroke-linecap="round"/>
<path d="M4.600 11.200 L5.400 8.830 L11.890 2.820 L13.520 4.580 L7.030 10.590 Z" stroke="#4262ea" stroke-width="1.200" stroke-linejoin="round"/></svg>
<svg style="position:absolute;left:1502px;top:571.9px;" width="18" height="20" viewBox="0 0 18 20" fill="none"><path d="M12.500 3.300V3.200A2.700 2.700 0 0 0 9.800 .7H4A2.700 2.700 0 0 0 1.300 3.400v9A2.700 2.700 0 0 0 4 15.100h.2" stroke="#555" stroke-width="1.200" stroke-linecap="round"/>
<rect x="4.700" y="3.700" width="11.600" height="14.800" rx="3" stroke="#555" stroke-width="1.200"/>
<path d="M8.600 8.900h2.600M8.600 12h4.400M8.600 14.900h4.400" stroke="#555" stroke-width="1.100" stroke-linecap="round"/></svg>
<svg style="position:absolute;left:1539px;top:573.35px;" width="6" height="16" viewBox="0 0 6 16" fill="none"><circle cx="3" cy="2.800" r="1.100" fill="#3a3a3a"/><circle cx="3" cy="8" r="1.100" fill="#3a3a3a"/><circle cx="3" cy="13.200" r="1.100" fill="#3a3a3a"/></svg>
<div style="position:absolute;left:1457px;top:598px;width:102px;height:34px;background:#fff"></div>
<svg style="position:absolute;left:1470.5px;top:608px;" width="16" height="16" viewBox="0 0 16 16" fill="none"><path d="M5.400 7.700H4.300A2.100 2.100 0 0 0 2.200 9.800v2.400a2.100 2.100 0 0 0 2.100 2.100h7.700a2.100 2.100 0 0 0 2.100-2.100V9.700" stroke="#4262ea" stroke-width="1.300" stroke-linecap="round"/>
<path d="M4.600 11.200 L5.400 8.830 L11.890 2.820 L13.520 4.580 L7.030 10.590 Z" stroke="#4262ea" stroke-width="1.200" stroke-linejoin="round"/></svg>
<svg style="position:absolute;left:1502px;top:606.9px;" width="18" height="20" viewBox="0 0 18 20" fill="none"><path d="M12.500 3.300V3.200A2.700 2.700 0 0 0 9.800 .7H4A2.700 2.700 0 0 0 1.300 3.400v9A2.700 2.700 0 0 0 4 15.100h.2" stroke="#555" stroke-width="1.200" stroke-linecap="round"/>
<rect x="4.700" y="3.700" width="11.600" height="14.800" rx="3" stroke="#555" stroke-width="1.200"/>
<path d="M8.600 8.900h2.600M8.600 12h4.400M8.600 14.900h4.400" stroke="#555" stroke-width="1.100" stroke-linecap="round"/></svg>
<svg style="position:absolute;left:1539px;top:608.35px;" width="6" height="16" viewBox="0 0 6 16" fill="none"><circle cx="3" cy="2.800" r="1.100" fill="#3a3a3a"/><circle cx="3" cy="8" r="1.100" fill="#3a3a3a"/><circle cx="3" cy="13.200" r="1.100" fill="#3a3a3a"/></svg>
</div></div>
<div style="position:absolute;left:288px;top:633px;width:1271px;height:35px;background:#f2f3f5"></div>
<div style="position:absolute;left:288px;top:632px;width:1271px;height:1px;background:#dcdcdc"></div>
<div style="position:absolute;left:320px;top:633px;width:1px;height:35px;background:#e4e4e4"></div>
<div style="position:absolute;left:370px;top:633px;width:1px;height:35px;background:#e4e4e4"></div>
<div style="position:absolute;left:500px;top:633px;width:1px;height:35px;background:#e4e4e4"></div>
<div style="position:absolute;left:680px;top:633px;width:1px;height:35px;background:#e4e4e4"></div>
<div style="position:absolute;left:850px;top:633px;width:1px;height:35px;background:#e4e4e4"></div>
<div style="position:absolute;left:1050px;top:633px;width:1px;height:35px;background:#e4e4e4"></div>
<div style="position:absolute;left:1210px;top:633px;width:1px;height:35px;background:#e4e4e4"></div>
<div style="position:absolute;left:1330px;top:633px;width:1px;height:35px;background:#e4e4e4"></div>
<div style="position:absolute;left:1456px;top:633px;width:1px;height:35px;background:#e4e4e4"></div>
<div style="position:absolute;top:639.80px;line-height:20px;font-size:13px;font-weight:700;color:#1f1f1f;white-space:nowrap;letter-spacing:0.142px;right:381.16px;text-align:right;">112.375.612.819 Đ</div>
<div style="position:absolute;top:639.80px;line-height:20px;font-size:13px;font-weight:700;color:#1f1f1f;white-space:nowrap;letter-spacing:-0.134px;right:261.33px;text-align:right;">74</div>
<div style="position:absolute;left:1559px;top:163px;width:7px;height:505px;background:#f4f4f4"></div>
<div style="position:absolute;left:1559px;top:525px;width:7px;height:106px;background:#d2d2d2"></div>
<div style="position:absolute;left:288px;top:93px;width:1278px;height:70.5px;background:#f5f5f5"></div>
<div style="position:absolute;left:288px;top:128px;width:1278px;height:1px;background:#e4e4e4"></div>
<div style="position:absolute;left:320px;top:93px;width:1px;height:70.5px;background:#e4e4e4"></div>
<div style="position:absolute;left:370px;top:93px;width:1px;height:70.5px;background:#e4e4e4"></div>
<div style="position:absolute;left:500px;top:93px;width:1px;height:70.5px;background:#e4e4e4"></div>
<div style="position:absolute;left:680px;top:93px;width:1px;height:70.5px;background:#e4e4e4"></div>
<div style="position:absolute;left:850px;top:93px;width:1px;height:70.5px;background:#e4e4e4"></div>
<div style="position:absolute;left:1050px;top:93px;width:1px;height:70.5px;background:#e4e4e4"></div>
<div style="position:absolute;left:1210px;top:93px;width:1px;height:70.5px;background:#e4e4e4"></div>
<div style="position:absolute;left:1330px;top:93px;width:1px;height:70.5px;background:#e4e4e4"></div>
<div style="position:absolute;left:1456px;top:93px;width:1px;height:70.5px;background:#e4e4e4"></div>
<div style="position:absolute;left:295px;top:101px;width:16px;height:16px;background:#fff;border:1px solid #b3b3b3;border-radius:3px"></div>
<div style="position:absolute;top:101.30px;line-height:20px;font-size:13px;font-weight:700;color:#1f1f1f;white-space:nowrap;letter-spacing:-0.573px;left:144.71px;width:400px;text-align:center;">STT</div>
<div style="position:absolute;top:101.30px;line-height:20px;font-size:13px;font-weight:700;color:#1f1f1f;white-space:nowrap;letter-spacing:-0.452px;left:381.3px;">Tình trạng dữ liệu</div>
<div style="position:absolute;top:101.30px;line-height:20px;font-size:13px;font-weight:700;color:#1f1f1f;white-space:nowrap;letter-spacing:-0.357px;left:511.5px;">Trạng thái tài sản</div>
<div style="position:absolute;top:101.30px;line-height:20px;font-size:13px;font-weight:700;color:#1f1f1f;white-space:nowrap;letter-spacing:-0.306px;left:691.3px;">Mã tài sản</div>
<div style="position:absolute;top:101.30px;line-height:20px;font-size:13px;font-weight:700;color:#1f1f1f;white-space:nowrap;letter-spacing:-0.432px;left:861px;">Tên tài sản</div>
<div style="position:absolute;top:101.30px;line-height:20px;font-size:13px;font-weight:700;color:#1f1f1f;white-space:nowrap;letter-spacing:-0.508px;right:381.91px;text-align:right;">Nguyên giá</div>
<div style="position:absolute;top:101.30px;line-height:20px;font-size:13px;font-weight:700;color:#1f1f1f;white-space:nowrap;letter-spacing:-0.822px;right:262.02px;text-align:right;">Số lượng</div>
<div style="position:absolute;left:1331px;top:94px;width:126px;height:34px;overflow:hidden"><div style="position:absolute;left:54px;top:6.500px;line-height:20px;font-size:13px;font-weight:700;color:#1f1f1f;white-space:nowrap;letter-spacing:-0.180px">HM/KH lũy kế</div></div>
<div style="position:absolute;top:101.30px;line-height:20px;font-size:13px;font-weight:700;color:#1f1f1f;white-space:nowrap;letter-spacing:-0.738px;left:1311.03px;width:400px;text-align:center;">Chức năng</div>
<div style="position:absolute;left:374px;top:132.4px;width:123px;height:27.2px;background:#fff;border:1px solid #dbdbdb;border-radius:2.500px"></div>
<svg style="position:absolute;left:481px;top:143px;" width="9" height="6" viewBox="0 0 9 6" fill="none"><path d="M1.400 1h6.200L4.500 4.500z" fill="#1a1a1a" stroke="#1a1a1a" stroke-width="1.100" stroke-linejoin="round"/></svg>
<div style="position:absolute;left:504px;top:132.4px;width:173px;height:27.2px;background:#fff;border:1px solid #dbdbdb;border-radius:2.500px"></div>
<svg style="position:absolute;left:661px;top:143px;" width="9" height="6" viewBox="0 0 9 6" fill="none"><path d="M1.400 1h6.200L4.500 4.500z" fill="#1a1a1a" stroke="#1a1a1a" stroke-width="1.100" stroke-linejoin="round"/></svg>
<div style="position:absolute;left:684px;top:132.4px;width:163px;height:27.2px;background:#fff;border:1px solid #dbdbdb;border-radius:2.500px"></div>
<div style="position:absolute;left:822px;top:134px;width:1px;height:25px;background:#d9d9d9"></div>
<svg style="position:absolute;left:828px;top:139.5px;" width="14" height="14" viewBox="0 0 14 14" fill="none"><path d="M1.200 1.300h11.600L8.600 7v5.600L5.600 11V7z" stroke="#333" stroke-width="1.100" stroke-linejoin="round"/></svg>
<div style="position:absolute;left:854px;top:132.4px;width:193px;height:27.2px;background:#fff;border:1px solid #dbdbdb;border-radius:2.500px"></div>
<div style="position:absolute;left:1022px;top:134px;width:1px;height:25px;background:#d9d9d9"></div>
<svg style="position:absolute;left:1028px;top:139.5px;" width="14" height="14" viewBox="0 0 14 14" fill="none"><path d="M1.200 1.300h11.600L8.600 7v5.600L5.600 11V7z" stroke="#333" stroke-width="1.100" stroke-linejoin="round"/></svg>
<div style="position:absolute;left:1054px;top:132.4px;width:153px;height:27.2px;background:#fff;border:1px solid #dbdbdb;border-radius:2.500px"></div>
<div style="position:absolute;left:1084px;top:134px;width:1px;height:25px;background:#d9d9d9"></div>
<div style="position:absolute;top:135.80px;line-height:20px;font-size:11px;font-weight:400;color:#555;white-space:nowrap;left:869.00px;width:400px;text-align:center;">=</div>
<div style="position:absolute;left:1214px;top:132.4px;width:113px;height:27.2px;background:#fff;border:1px solid #dbdbdb;border-radius:2.500px"></div>
<div style="position:absolute;left:1244px;top:134px;width:1px;height:25px;background:#d9d9d9"></div>
<div style="position:absolute;top:135.80px;line-height:20px;font-size:11px;font-weight:400;color:#555;white-space:nowrap;left:1029.00px;width:400px;text-align:center;">=</div>
<div style="position:absolute;left:1331px;top:129px;width:126px;height:34px;overflow:hidden"><div style="position:absolute;left:3px;top:3.4px;width:153px;height:27.2px;background:#fff;border:1px solid #dbdbdb;border-radius:2.500px"></div><div style="position:absolute;left:33px;top:5px;width:1px;height:25px;background:#d9d9d9"></div></div>
<div style="position:absolute;top:135.80px;line-height:20px;font-size:11px;font-weight:400;color:#555;white-space:nowrap;left:1149.00px;width:400px;text-align:center;">=</div>
<div style="position:absolute;left:1456px;top:129px;width:110px;height:34.5px;background:#f5f5f5;border-left:1px solid #e4e4e4"></div>
<div style="position:absolute;left:288px;top:162px;width:1278px;height:1px;background:rgba(0,0,0,0.03)"></div>
<div style="position:absolute;left:288px;top:667px;width:1278px;height:5px;background:#ededed"></div>
<div style="position:absolute;left:289px;top:667px;width:600px;height:5px;background:#c9c9c9"></div>
<div style="position:absolute;left:288px;top:672px;width:1278px;height:1px;background:#b3b3b3"></div>
<div style="position:absolute;top:678.80px;line-height:20px;font-size:13px;font-weight:400;color:#4262ea;white-space:nowrap;letter-spacing:-0.011px;left:304px;">Lịch sử biến động</div>
<div style="position:absolute;left:304px;top:703.7px;width:104px;height:2px;background:#4262ea"></div>
<div style="position:absolute;top:678.80px;line-height:20px;font-size:13px;font-weight:400;color:#1f1f1f;white-space:nowrap;letter-spacing:-0.089px;left:440px;">Thông tin kê khai</div>
<div style="position:absolute;top:678.80px;line-height:20px;font-size:13px;font-weight:400;color:#1f1f1f;white-space:nowrap;letter-spacing:-0.142px;left:570px;">Tệp đính kèm</div>
<div style="position:absolute;left:288px;top:707px;width:1278px;height:36px;background:#f5f5f5"></div>
<div style="position:absolute;left:288px;top:742px;width:1278px;height:1px;background:#e4e4e4"></div>
<div style="position:absolute;left:288px;top:777px;width:1278px;height:1px;background:#e4e4e4"></div>
<div style="position:absolute;left:347px;top:707px;width:1px;height:71px;background:#e4e4e4"></div>
<div style="position:absolute;left:467px;top:707px;width:1px;height:71px;background:#e4e4e4"></div>
<div style="position:absolute;left:617px;top:707px;width:1px;height:71px;background:#e4e4e4"></div>
<div style="position:absolute;left:767px;top:707px;width:1px;height:71px;background:#e4e4e4"></div>
<div style="position:absolute;left:917px;top:707px;width:1px;height:71px;background:#e4e4e4"></div>
<div style="position:absolute;left:1067px;top:707px;width:1px;height:71px;background:#e4e4e4"></div>
<div style="position:absolute;left:1217px;top:707px;width:1px;height:71px;background:#e4e4e4"></div>
<div style="position:absolute;left:1367px;top:707px;width:1px;height:71px;background:#e4e4e4"></div>
<div style="position:absolute;left:1517px;top:707px;width:1px;height:71px;background:#e4e4e4"></div>
<div style="position:absolute;top:715.30px;line-height:20px;font-size:13px;font-weight:700;color:#1f1f1f;white-space:nowrap;letter-spacing:-0.573px;left:116.71px;width:400px;text-align:center;">STT</div>
<div style="position:absolute;top:715.30px;line-height:20px;font-size:13px;font-weight:700;color:#1f1f1f;white-space:nowrap;letter-spacing:-0.677px;left:358px;">Số chứng từ</div>
<div style="position:absolute;top:715.30px;line-height:20px;font-size:13px;font-weight:700;color:#1f1f1f;white-space:nowrap;letter-spacing:-0.633px;left:341.68px;width:400px;text-align:center;">Ngày chứng từ</div>
<div style="position:absolute;top:715.30px;line-height:20px;font-size:13px;font-weight:700;color:#1f1f1f;white-space:nowrap;letter-spacing:-0.429px;left:491.79px;width:400px;text-align:center;">Ngày biến động</div>
<div style="position:absolute;top:715.30px;line-height:20px;font-size:13px;font-weight:700;color:#1f1f1f;white-space:nowrap;letter-spacing:-0.493px;left:778px;">Nội dung</div>
<div style="position:absolute;top:715.30px;line-height:20px;font-size:13px;font-weight:700;color:#1f1f1f;white-space:nowrap;letter-spacing:-0.491px;right:524.99px;text-align:right;">Nguyên giá</div>
<div style="position:absolute;top:715.30px;line-height:20px;font-size:13px;font-weight:700;color:#1f1f1f;white-space:nowrap;letter-spacing:-0.465px;right:374.46px;text-align:right;">Số tiền thực hiện</div>
<div style="position:absolute;top:715.30px;line-height:20px;font-size:13px;font-weight:700;color:#1f1f1f;white-space:nowrap;letter-spacing:-0.231px;right:224.73px;text-align:right;">Giá trị HM/KH</div>
<div style="position:absolute;top:751.30px;line-height:20px;font-size:13px;font-weight:400;color:#1f1f1f;white-space:nowrap;left:117.00px;width:400px;text-align:center;">1</div>
<div style="position:absolute;top:751.30px;line-height:20px;font-size:13px;font-weight:400;color:#1f1f1f;white-space:nowrap;letter-spacing:0.362px;left:342.18px;width:400px;text-align:center;">01/01/2023</div>
<div style="position:absolute;top:751.30px;line-height:20px;font-size:13px;font-weight:400;color:#1f1f1f;white-space:nowrap;letter-spacing:0.362px;left:492.18px;width:400px;text-align:center;">01/01/2023</div>
<div style="position:absolute;top:751.30px;line-height:20px;font-size:13px;font-weight:400;color:#1f1f1f;white-space:nowrap;letter-spacing:-0.131px;left:778px;">Cập nhật loại tài sản t...</div>
<div style="position:absolute;left:1556px;top:756px;width:1.5px;height:3px;background:#9fb0f5"></div>
<div style="position:absolute;left:1556px;top:763px;width:1.5px;height:3px;background:#9fb0f5"></div>
<div style="position:absolute;left:288px;top:823px;width:1276px;height:7px;background:#e6e6e6"></div>
<div style="position:absolute;left:288px;top:823px;width:1108px;height:7px;background:#cbcbcb"></div>
<div style="position:absolute;left:1566px;top:303px;width:20px;height:90px;background:#4262ea;border-radius:7px"></div>
<svg style="position:absolute;left:1569px;top:342px;" width="10" height="12" viewBox="0 0 10 12" fill="none"><path d="M7 2.500L3.500 6 7 9.500" stroke="#fff" stroke-width="1.600" stroke-linecap="round" stroke-linejoin="round"/></svg>
<div style="position:absolute;left:1584px;top:694px;width:20px;height:132px;background:#555;border-radius:6px;box-shadow:0 0 13px 3px rgba(30,35,50,0.550)"></div>
<div style="position:absolute;left:1361px;top:386px;width:194px;height:433px;background:#fff;border-radius:4px;box-shadow:0 2px 8px rgba(0,0,0,0.28),0 0 1px rgba(0,0,0,0.3)"></div>
<div style="position:absolute;left:1362px;top:422px;width:192px;height:46px;background:#f0f1f3"></div>
<div style="position:absolute;left:1361px;top:504px;width:194px;height:1px;background:#e3e3e3"></div>
<div style="position:absolute;left:1361px;top:739px;width:194px;height:1px;background:#e3e3e3"></div>
<div style="position:absolute;left:1361px;top:779px;width:194px;height:1px;background:#e3e3e3"></div>
<svg style="position:absolute;left:1369.3px;top:394.4px;" width="22" height="22" viewBox="-11 -11 22 22" fill="none"><g transform="scale(0.940,1)"><path d="M-1.300 -8.500 Q0 -9.300 1.300 -8.500 L7.900 -4.900 Q9.300 -4.100 7.900 -3.300 L1.300 1.500 Q0 2.400 -1.300 1.500 L-7.900 -3.300 Q-9.300 -4.100 -7.900 -4.900 Z" stroke="#444" stroke-width="1.5" stroke-linejoin="round"/><path d="M-8.800 -0.600 L-1.200 5 Q0 5.800 1.200 5 L8.800 -0.600 M-8.800 2.700 L-1.200 8.400 Q0 9.200 1.200 8.400 L8.800 2.700" stroke="#444" stroke-width="1.5" stroke-linecap="round" stroke-linejoin="round"/><path d="M-8.800 -4.100 V2.700 M8.800 -4.100 V2.700" stroke="#444" stroke-width="1.5" stroke-linecap="round"/></g></svg>
<div style="position:absolute;top:395.80px;line-height:20px;font-size:13px;font-weight:400;color:#454545;white-space:nowrap;letter-spacing:-0.099px;left:1396.7px;">Chuyển loại tài sản</div>
<svg style="position:absolute;left:1369.3px;top:433.6px;" width="22" height="22" viewBox="-11 -11 22 22" fill="none"><g transform="scale(0.940,1)"><path d="M-1.300 -8.500 Q0 -9.300 1.300 -8.500 L7.900 -4.900 Q9.300 -4.100 7.900 -3.300 L1.300 1.500 Q0 2.400 -1.300 1.500 L-7.900 -3.300 Q-9.300 -4.100 -7.900 -4.900 Z" stroke="#444" stroke-width="1.5" stroke-linejoin="round"/><path d="M-8.800 -0.600 L-1.200 5 Q0 5.800 1.200 5 L8.800 -0.600 M-8.800 2.700 L-1.200 8.400 Q0 9.200 1.200 8.400 L3 7.100" stroke="#444" stroke-width="1.5" stroke-linecap="round" stroke-linejoin="round"/><path d="M-8.800 -4.100 V2.700 M8.800 -4.100 V1.500" stroke="#444" stroke-width="1.5" stroke-linecap="round"/><path d="M4.400 4.700 L8.600 9 M8.600 4.700 L4.400 9" stroke="#444" stroke-width="1.5" stroke-linecap="round"/></g></svg>
<div style="position:absolute;top:435.30px;line-height:20px;font-size:13px;font-weight:400;color:#454545;white-space:nowrap;letter-spacing:-0.071px;left:1396.7px;">Hủy chuyển loại tài sản</div>
<svg style="position:absolute;left:1369.3px;top:473.6px;" width="22" height="22" viewBox="-11 -11 22 22" fill="none"><g transform="scale(0.940,1)"><path d="M-1.300 -8.500 Q0 -9.300 1.300 -8.500 L7.900 -4.900 Q9.300 -4.100 7.900 -3.300 L1.300 1.500 Q0 2.400 -1.300 1.500 L-7.900 -3.300 Q-9.300 -4.100 -7.900 -4.900 Z" stroke="#444" stroke-width="1.5" stroke-linejoin="round"/><path d="M-8.800 -0.600 L-1.200 5 Q0 5.800 1.200 5 L8.800 -0.600 M-8.800 2.700 L-1.200 8.400 Q0 9.200 1.200 8.400 L3 7.100" stroke="#444" stroke-width="1.5" stroke-linecap="round" stroke-linejoin="round"/><path d="M-8.800 -4.100 V2.700 M8.800 -4.100 V1.500" stroke="#444" stroke-width="1.5" stroke-linecap="round"/><path d="M4.400 4.700 L8.600 9 M8.600 4.700 L4.400 9" stroke="#444" stroke-width="1.5" stroke-linecap="round"/></g></svg>
<div style="position:absolute;top:475.30px;line-height:20px;font-size:13px;font-weight:400;color:#454545;white-space:nowrap;letter-spacing:-0.075px;left:1396.7px;">Hủy chuẩn hóa tài sản</div>
<svg style="position:absolute;left:1370.5px;top:515.8px;" width="20" height="20" viewBox="0 0 20 20" fill="none"><rect x="1.500" y="1.500" width="16" height="16" rx="4" stroke="#444" stroke-width="1.400"/><path d="M9.500 5.800v7.400M5.800 9.500h7.400" stroke="#444" stroke-width="1.400" stroke-linecap="round"/></svg>
<div style="position:absolute;top:515.30px;line-height:20px;font-size:13px;font-weight:400;color:#454545;white-space:nowrap;letter-spacing:-0.157px;left:1396.7px;">Ghi tăng</div>
<svg style="position:absolute;left:1370px;top:553px;" width="20" height="20" viewBox="0 0 20 20" fill="none"><path d="M11 2.800H6A4 4 0 0 0 2 6.800v7.200a4 4 0 0 0 4 4h6.500a4 4 0 0 0 4-4V10" stroke="#444" stroke-width="1.400" stroke-linecap="round"/><path d="M10.500 9.500l6-7" stroke="#444" stroke-width="1.400" stroke-linecap="round"/><path d="M6.500 12.800h4" stroke="#444" stroke-width="1.400" stroke-linecap="round"/></svg>
<div style="position:absolute;top:554.30px;line-height:20px;font-size:13px;font-weight:400;color:#454545;white-space:nowrap;letter-spacing:-0.02px;left:1397.7px;">Thay đổi thông tin</div>
<svg style="position:absolute;left:1370px;top:592px;" width="22" height="22" viewBox="0 0 22 22" fill="none"><rect x="12.500" y="1.500" width="7.500" height="7.500" rx="2" stroke="#444" stroke-width="1.400"/><rect x="12.500" y="12.500" width="7.500" height="7.500" rx="2" stroke="#444" stroke-width="1.400"/><path d="M8.500 6.300H7" stroke="#444" stroke-width="1.400" stroke-linecap="round"/><path d="M4.600 6.300H4A2.300 2.300 0 0 0 1.800 8.600v5.400a2.300 2.300 0 0 0 2.200 2.300h4.500" stroke="#444" stroke-width="1.400" stroke-linecap="round"/><path d="M6.800 14l2.300 2.300-2.300 2.300" stroke="#444" stroke-width="1.400" stroke-linecap="round" stroke-linejoin="round"/></svg>
<div style="position:absolute;top:593.30px;line-height:20px;font-size:13px;font-weight:400;color:#454545;white-space:nowrap;letter-spacing:-0.163px;left:1398.7px;">Chuyển nguồn hình thành</div>
<svg style="position:absolute;left:1370px;top:631px;" width="20" height="20" viewBox="0 0 20 20" fill="none"><path d="M9 2H6A4 4 0 0 0 2 6v8a4 4 0 0 0 4 4h8a4 4 0 0 0 4-4v-2.500" stroke="#444" stroke-width="1.400" stroke-linecap="round"/><path d="M11.300 3.500a4 4 0 1 1-.3 4.800" stroke="#444" stroke-width="1.300" stroke-linecap="round"/><path d="M14.200 3.800v2.500h2" stroke="#444" stroke-width="1.200" stroke-linecap="round" stroke-linejoin="round"/></svg>
<div style="position:absolute;top:632.30px;line-height:20px;font-size:13px;font-weight:400;color:#454545;white-space:nowrap;letter-spacing:-0.171px;left:1397.7px;">Đánh giá lại</div>
<svg style="position:absolute;left:1370px;top:670px;" width="20" height="20" viewBox="0 0 20 20" fill="none"><rect x="1.800" y="1.800" width="16.400" height="16.400" rx="4" stroke="#444" stroke-width="1.400"/><path d="M6 8h8.500l-2.200-2.200M14.500 12H6l2.200 2.200" stroke="#444" stroke-width="1.300" stroke-linecap="round" stroke-linejoin="round"/></svg>
<div style="position:absolute;top:671.30px;line-height:20px;font-size:13px;font-weight:400;color:#454545;white-space:nowrap;letter-spacing:-0.226px;left:1397.7px;">Điều chuyển</div>
<svg style="position:absolute;left:1370px;top:709px;" width="20" height="20" viewBox="0 0 20 20" fill="none"><rect x="1.800" y="1.800" width="16.400" height="16.400" rx="4" stroke="#444" stroke-width="1.400"/><path d="M6.300 10h7.400" stroke="#444" stroke-width="1.400" stroke-linecap="round"/></svg>
<div style="position:absolute;top:710.30px;line-height:20px;font-size:13px;font-weight:400;color:#454545;white-space:nowrap;letter-spacing:-0.179px;left:1396.7px;">Ghi giảm</div>
<svg style="position:absolute;left:1370px;top:749px;" width="21" height="21" viewBox="0 0 22 22" fill="none"><path d="M6.200 7V5.200A2.700 2.700 0 0 1 8.900 2.500h4.200a2.700 2.700 0 0 1 2.700 2.700V7" stroke="#444" stroke-width="1.5"/>
<path d="M6.200 16.800H5.400A3.100 3.100 0 0 1 2.300 13.700V10A3.100 3.100 0 0 1 5.400 6.900h11.200A3.100 3.100 0 0 1 19.700 10v3.700a3.100 3.100 0 0 1-3.100 3.100h-.8" stroke="#444" stroke-width="1.5"/>
<rect x="6.200" y="12.500" width="9.600" height="7.500" rx="2.400" stroke="#444" stroke-width="1.5"/><path d="M14.600 9.900h1.900" stroke="#444" stroke-width="1.5" stroke-linecap="round"/></svg>
<div style="position:absolute;top:750.30px;line-height:20px;font-size:13px;font-weight:400;color:#454545;white-space:nowrap;letter-spacing:-0.422px;left:1398.7px;">In</div>
<svg style="position:absolute;left:1535px;top:754px;" width="10" height="12" viewBox="0 0 10 12" fill="none"><path d="M3 2.500L6.800 6 3 9.500" stroke="#445" stroke-width="1.300" stroke-linecap="round" stroke-linejoin="round"/></svg>
<svg style="position:absolute;left:1370px;top:788px;" width="20" height="22" viewBox="0 0 20 22" fill="none"><path d="M2 5.500h16" stroke="#e0431b" stroke-width="1.600" stroke-linecap="round"/><path d="M7 5.300V4a2 2 0 0 1 2-2h2a2 2 0 0 1 2 2v1.300" stroke="#e0431b" stroke-width="1.500"/><path d="M3.800 5.800l.8 11.400a2.600 2.600 0 0 0 2.600 2.400h5.600a2.600 2.600 0 0 0 2.600-2.400l.8-11.400" stroke="#e0431b" stroke-width="1.600" stroke-linecap="round"/><path d="M8.200 9.500v6M11.800 9.500v6" stroke="#e0431b" stroke-width="1.600" stroke-linecap="round"/></svg>
<div style="position:absolute;top:790.30px;line-height:20px;font-size:13px;font-weight:400;color:#454545;white-space:nowrap;letter-spacing:-0.447px;left:1396.7px;">Xóa</div>
<div style="position:absolute;left:1360px;top:421px;width:196px;height:47.5px;border:3px solid #db131a"></div>
<div style="position:absolute;left:1525.2px;top:350.2px;width:32px;height:37.3px;border:3.200px solid #db131a"></div>
<div style="position:absolute;left:1492px;top:330.4px;width:40px;height:40px;background:#f8434a;border-radius:20px"></div>
<div style="position:absolute;top:330.10px;line-height:40px;font-size:27.5px;font-weight:400;color:#fff;white-space:nowrap;left:1312.00px;width:400px;text-align:center;">1</div>
<div style="position:absolute;left:1327px;top:401px;width:40px;height:40px;background:#f8434a;border-radius:20px"></div>
<div style="position:absolute;top:401.10px;line-height:40px;font-size:28.5px;font-weight:400;color:#fff;white-space:nowrap;left:1147.00px;width:400px;text-align:center;">2</div>
</body></html>
